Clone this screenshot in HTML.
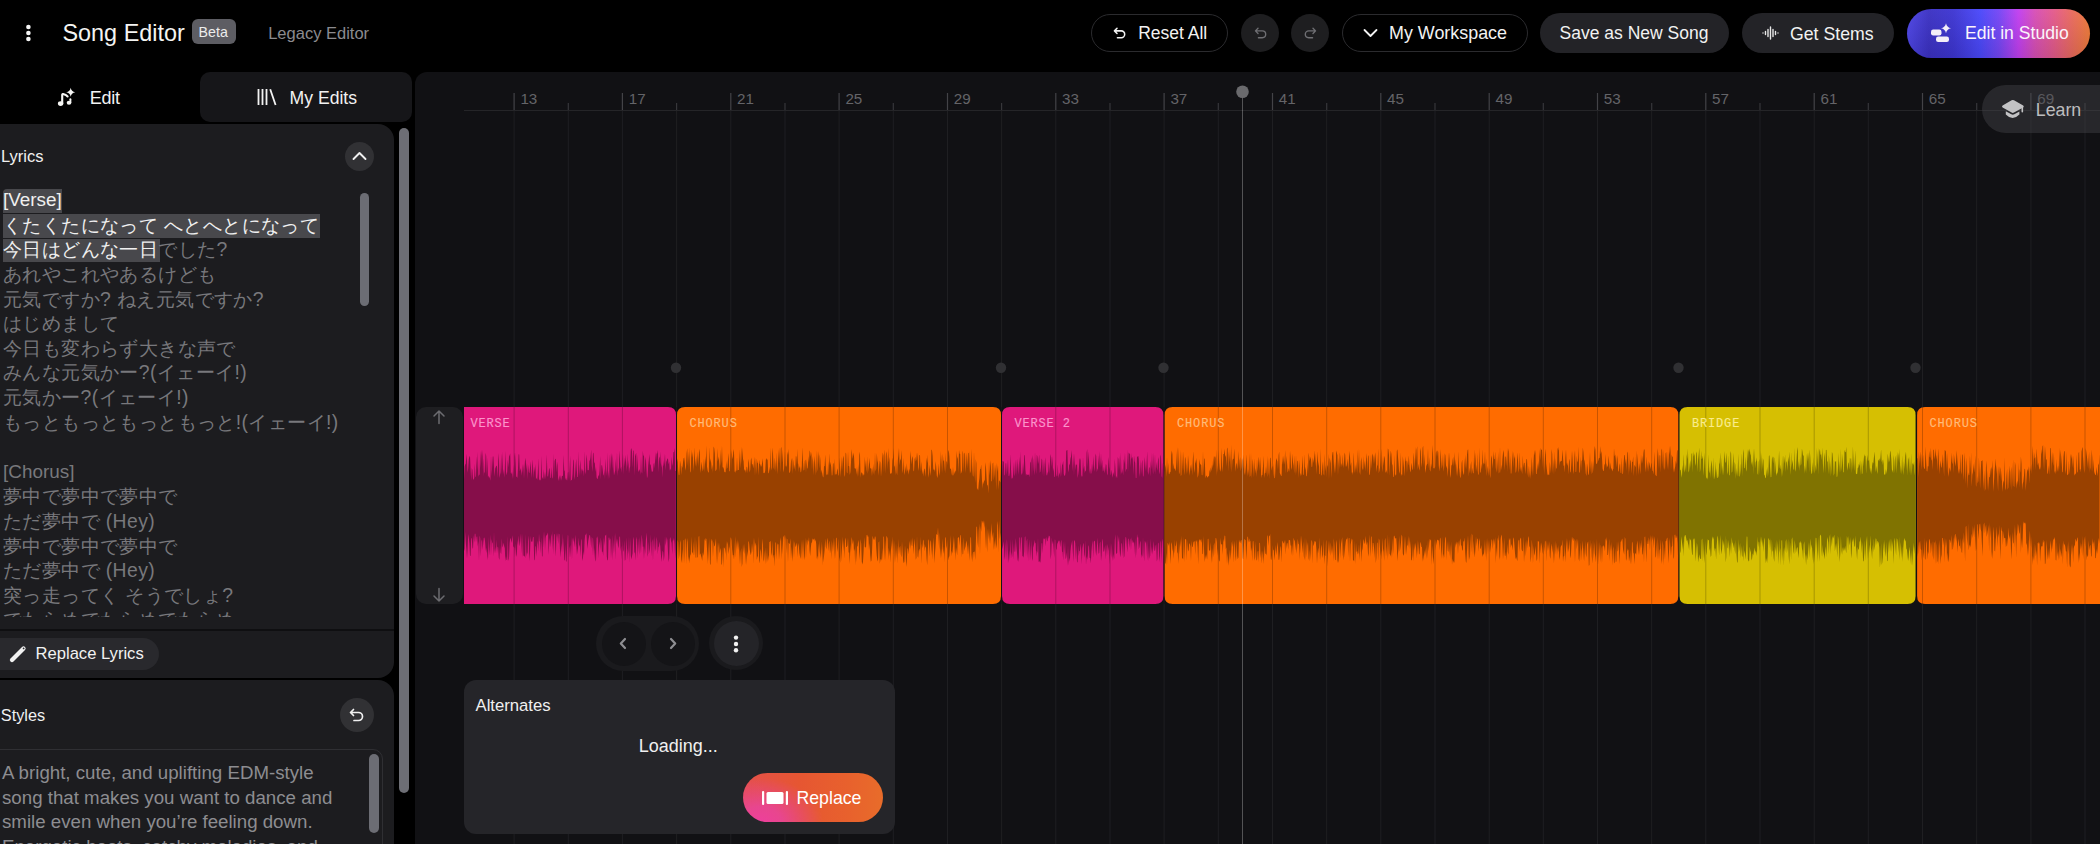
<!DOCTYPE html>
<html><head><meta charset="utf-8">
<style>
html,body{margin:0;padding:0}
body{width:2100px;height:844px;background:#000;overflow:hidden;position:relative;font-family:"Liberation Sans",sans-serif;color:#f2f2f2}
.a{position:absolute}
.t{position:absolute;line-height:1;white-space:pre}
.btn{position:absolute;box-sizing:border-box;border-radius:999px}
svg{position:absolute;overflow:visible}
</style></head><body>

<!-- ===== HEADER ===== -->
<svg style="left:0;top:0" width="40" height="60"><circle cx="28.4" cy="27" r="2.3" fill="#f5f5f5"/><circle cx="28.4" cy="33" r="2.3" fill="#f5f5f5"/><circle cx="28.4" cy="39" r="2.3" fill="#f5f5f5"/></svg>
<div class="t" style="left:62.5px;top:22.1px;font-size:23.4px;color:#f4f4f2">Song Editor</div>
<div class="a" style="left:191.7px;top:19.4px;width:44.6px;height:24.3px;border-radius:6px;background:#5d5d63"></div>
<div class="t" style="left:198.6px;top:24.7px;font-size:14.2px;color:#ececec">Beta</div>
<div class="t" style="left:268.2px;top:24.8px;font-size:16.5px;color:#8b8b8f">Legacy Editor</div>

<!-- Reset All -->
<div class="btn" style="left:1091px;top:14px;width:137px;height:38px;border:1px solid #2b2b2e"></div>
<svg style="left:1112px;top:26px" width="16" height="14" viewBox="-1.2 -1.2 18.4 16.4"><path d="M4.5 1.5 L1.5 4.5 L4.5 7.5 M1.8 4.5 H9.5 a4 4 0 0 1 0 8 H5" fill="none" stroke="#f2f2f2" stroke-width="1.8" stroke-linecap="round" stroke-linejoin="round"/></svg>
<div class="t" style="left:1138.2px;top:25.3px;font-size:17.5px">Reset All</div>
<!-- undo / redo -->
<div class="btn" style="left:1241px;top:14px;width:38px;height:38px;background:#1e1e20"></div>
<svg style="left:1252.5px;top:26px" width="16" height="14" viewBox="-1.2 -1.2 18.4 16.4"><path d="M4.5 1.5 L1.5 4.5 L4.5 7.5 M1.8 4.5 H9.5 a4 4 0 0 1 0 8 H5" fill="none" stroke="#6f6f73" stroke-width="1.6" stroke-linecap="round" stroke-linejoin="round"/></svg>
<div class="btn" style="left:1291px;top:14px;width:38px;height:38px;background:#1e1e20"></div>
<svg style="left:1302px;top:26px" width="16" height="14" viewBox="-1.2 -1.2 18.4 16.4"><path d="M11.5 1.5 L14.5 4.5 L11.5 7.5 M14.2 4.5 H6.5 a4 4 0 0 0 0 8 H11" fill="none" stroke="#6f6f73" stroke-width="1.6" stroke-linecap="round" stroke-linejoin="round"/></svg>
<!-- My Workspace -->
<div class="btn" style="left:1342px;top:14px;width:186px;height:38px;border:1px solid #2b2b2e"></div>
<svg style="left:1363px;top:28px" width="16" height="10" viewBox="0 0 16 10"><path d="M1.5 2 L7.5 8 L13.5 2" fill="none" stroke="#f2f2f2" stroke-width="1.8" stroke-linecap="round" stroke-linejoin="round"/></svg>
<div class="t" style="left:1389px;top:25.3px;font-size:17.9px">My Workspace</div>
<!-- Save as New Song -->
<div class="btn" style="left:1540px;top:13px;width:189px;height:40px;background:#232327"></div>
<div class="t" style="left:1559.6px;top:25.3px;font-size:17.5px">Save as New Song</div>
<!-- Get Stems -->
<div class="btn" style="left:1742px;top:13px;width:152px;height:40px;background:#232327"></div>
<svg style="left:1762px;top:26px" width="17" height="14" viewBox="0 0 17 14"><g stroke="#e8e8e8" stroke-width="1.4" stroke-linecap="round"><path d="M1 7v0M3.5 5.5v3M6 3.5v7M8.5 1v12M11 3.5v7M13.5 5.5v3M16 7v0"/></g></svg>
<div class="t" style="left:1790px;top:25.8px;font-size:17.7px">Get Stems</div>
<!-- Edit in Studio -->
<div class="btn" style="left:1907px;top:8.5px;width:183px;height:49px;background:linear-gradient(90deg,#4d45e6 0%,#3b31c4 12%,#3d35d2 25%,#4a48fb 40%,#7446f6 50%,#c23ff0 61%,#d84fb6 70%,#e45a8c 80%,#ea6a5e 90%,#ee7a38 100%)"></div>
<div class="btn" style="left:1907px;top:8.5px;width:183px;height:49px;background:linear-gradient(180deg,rgba(255,255,255,0.04),rgba(0,0,0,0.10))"></div>
<svg style="left:1930px;top:22px" width="22" height="22" viewBox="0 0 22 22"><rect x="1" y="7.5" width="10.5" height="6" rx="2.2" fill="#f3eef8"/><rect x="6" y="14.5" width="13" height="5.5" rx="2.2" fill="#f3eef8"/><path d="M16 1.2 Q16.8 5.4 21 6.2 Q16.8 7 16 11.2 Q15.2 7 11 6.2 Q15.2 5.4 16 1.2Z" fill="#f3eef8"/></svg>
<div class="t" style="left:1965px;top:25.3px;font-size:17.6px;color:#fbf4fb">Edit in Studio</div>

<!-- ===== LEFT PANEL ===== -->
<svg style="left:50px;top:80px" width="30" height="30" viewBox="0 0 30 30"><ellipse cx="10.6" cy="23.6" rx="2.7" ry="2.3" fill="#f5f5f3"/><path d="M12.2 23.5 V14.8 Q12.5 13.6 14 14.2 Q16.2 15 17.6 16.4" fill="none" stroke="#f5f5f3" stroke-width="2.1" stroke-linecap="round"/><ellipse cx="19" cy="22.8" rx="2.3" ry="2" fill="#f5f5f3"/><path d="M20.4 22.6 V19.3" stroke="#f5f5f3" stroke-width="1.9" stroke-linecap="round"/><path d="M20.7 7.8 Q21.3 11.6 25.2 12.3 Q21.3 13 20.7 16.8 Q20.1 13 16.2 12.3 Q20.1 11.6 20.7 7.8Z" fill="#f5f5f3"/></svg>
<div class="t" style="left:89.8px;top:89.4px;font-size:18px;letter-spacing:-0.25px">Edit</div>
<div class="a" style="left:200px;top:72px;width:212px;height:50px;border-radius:10px;background:#161619"></div>
<svg style="left:257px;top:88px" width="22" height="18" viewBox="0 0 22 18"><g stroke="#f2f2f2" stroke-width="1.8" stroke-linecap="butt"><path d="M1.5 1v16M5.5 1v16M9.5 1v16M13.2 1.2L18.6 17"/></g></svg>
<div class="t" style="left:289.6px;top:89.6px;font-size:17.6px">My Edits</div>

<!-- Lyrics panel -->
<div class="a" style="left:0;top:124px;width:394px;height:554px;border-radius:0 16px 16px 0;background:#1c1c1f"></div>
<div class="t" style="left:1px;top:148px;font-size:16.5px;color:#f0f0f0">Lyrics</div>
<div class="a" style="left:344.6px;top:141.7px;width:29.3px;height:29.3px;border-radius:50%;background:#313134"></div>
<svg style="left:352px;top:150px" width="16" height="12" viewBox="0 0 16 12"><path d="M1.5 9 L7.5 3 L13.5 9" fill="none" stroke="#f0f0f0" stroke-width="1.9" stroke-linecap="round" stroke-linejoin="round"/></svg>

<div class="a" style="left:3.3px;top:189.2px;width:58.3px;height:23.4px;border-radius:4px 0 0 0;background:#48484c"></div>
<div class="a" style="left:3.3px;top:213.6px;width:316.3px;height:24.4px;background:#48484c"></div>
<div class="a" style="left:3.3px;top:238.6px;width:156.7px;height:23.7px;background:#48484c"></div>
<div class="a" style="left:0;top:187.3px;width:355px;height:429.7px;overflow:hidden">
<div style="font-size:19.35px;letter-spacing:0.4px;line-height:24.59px;color:#78787c;padding-left:3px;white-space:pre;font-weight:300"><span style="color:#f0f0f0;letter-spacing:0;font-size:18.9px">[Verse]</span>
<span style="color:#f0f0f0">くたくたになって へとへとになって</span>
<span style="color:#f0f0f0">今日はどんな一日</span>でした?
あれやこれやあるけども
元気ですか? ねえ元気ですか?
はじめまして
今日も変わらず大きな声で
みんな元気かー?(イェーイ!)
元気かー?(イェーイ!)
もっともっともっともっと!(イェーイ!)

<span style="letter-spacing:0;font-size:18.9px">[Chorus]</span>
夢中で夢中で夢中で
ただ夢中で (Hey)
夢中で夢中で夢中で
ただ夢中で (Hey)
突っ走ってく そうでしょ?
でたらめでたらめでたらめ
</div></div>
<div class="a" style="left:359.8px;top:192.8px;width:9.2px;height:113px;border-radius:6px;background:#6c6d74"></div>
<div class="a" style="left:0;top:629px;width:394px;height:1.5px;background:#0f0f11"></div>
<div class="btn" style="left:-20px;top:637.6px;width:179px;height:32.8px;background:#29292d"></div>
<svg style="left:9px;top:645px" width="20" height="18" viewBox="0 0 20 18"><path d="M3 15 L14.5 3.5" stroke="#f2f2f2" stroke-width="4.2" stroke-linecap="round"/><circle cx="14.6" cy="3.4" r="0.9" fill="#29292d"/></svg>
<div class="t" style="left:35.5px;top:646px;font-size:16.6px">Replace Lyrics</div>

<!-- Styles panel -->
<div class="a" style="left:0;top:680.4px;width:394px;height:200px;border-radius:0 16px 0 0;background:#1c1c1f"></div>
<div class="t" style="left:0.8px;top:707.2px;font-size:16.3px;color:#f0f0f0">Styles</div>
<div class="a" style="left:340px;top:698px;width:34px;height:34px;border-radius:50%;background:#313134"></div>
<svg style="left:349px;top:708px" width="16" height="14" viewBox="0 0 16 14"><path d="M4.5 1.5 L1.5 4.5 L4.5 7.5 M1.8 4.5 H9.5 a4 4 0 0 1 0 8 H5" fill="none" stroke="#f0f0f0" stroke-width="1.7" stroke-linecap="round" stroke-linejoin="round"/></svg>
<div class="a" style="left:-12px;top:749px;width:395px;height:120px;box-sizing:border-box;border:1px solid #2f2f33;border-radius:10px"></div>
<div class="a" style="left:2px;top:761px;width:360px;font-size:18.7px;line-height:24.5px;color:#8d8d91">A bright, cute, and uplifting EDM-style<br>song that makes you want to dance and<br>smile even when you’re feeling down.<br>Energetic beats, catchy melodies, and</div>
<div class="a" style="left:369px;top:754px;width:10px;height:79px;border-radius:5px;background:#6c6d74"></div>

<!-- left column scrollbar -->
<div class="a" style="left:399px;top:128px;width:10px;height:665px;border-radius:5px;background:#6d6e75"></div>

<!-- ===== TIMELINE ===== -->
<div class="a" style="left:415px;top:72px;width:1700px;height:800px;border-radius:12px 0 0 0;background:#111114;overflow:hidden">
<svg style="left:-415px;top:-72px" width="2100" height="844" viewBox="0 0 2100 844">
<path d="M514.1 110V844M568.3 110V844M622.4 110V844M676.6 110V844M730.8 110V844M785.0 110V844M839.1 110V844M893.3 110V844M947.5 110V844M1001.6 110V844M1055.8 110V844M1110.0 110V844M1164.1 110V844M1218.3 110V844M1272.5 110V844M1326.7 110V844M1380.8 110V844M1435.0 110V844M1489.2 110V844M1543.3 110V844M1597.5 110V844M1651.7 110V844M1705.8 110V844M1760.0 110V844M1814.2 110V844M1868.3 110V844M1922.5 110V844M1976.7 110V844M2030.9 110V844M2085.0 110V844" stroke="#1f1f22" stroke-width="1"/>
<path d="M464 110.5H2100" stroke="#252528" stroke-width="1"/>
<path d="M514.1 93V110M622.4 93V110M730.8 93V110M839.1 93V110M947.5 93V110M1055.8 93V110M1164.1 93V110M1272.5 93V110M1380.8 93V110M1489.2 93V110M1597.5 93V110M1705.8 93V110M1814.2 93V110M1922.5 93V110M2030.9 93V110" stroke="#434347" stroke-width="1.2"/>
<path d="M568.3 103V110M676.6 103V110M785.0 103V110M893.3 103V110M1001.6 103V110M1110.0 103V110M1218.3 103V110M1326.7 103V110M1435.0 103V110M1543.3 103V110M1651.7 103V110M1760.0 103V110M1868.3 103V110M1976.7 103V110M2085.0 103V110" stroke="#37373a" stroke-width="1.2"/>
<circle cx="676" cy="367.7" r="5.2" fill="#303033"/>
<circle cx="1001" cy="367.7" r="5.2" fill="#303033"/>
<circle cx="1163.5" cy="367.7" r="5.2" fill="#303033"/>
<circle cx="1678.5" cy="367.7" r="5.2" fill="#303033"/>
<circle cx="1915.5" cy="367.7" r="5.2" fill="#303033"/>
<path d="M464 407H668Q676 407 676 415V596Q676 604 668 604H464Z" fill="#df187b"/>
<path d="M685 407H993Q1001 407 1001 415V596Q1001 604 993 604H685Q677 604 677 596V415Q677 407 685 407Z" fill="#ff6c00"/>
<path d="M1010 407H1155.4Q1163.4 407 1163.4 415V596Q1163.4 604 1155.4 604H1010Q1002 604 1002 596V415Q1002 407 1010 407Z" fill="#df187b"/>
<path d="M1172.6 407H1670.3Q1678.3 407 1678.3 415V596Q1678.3 604 1670.3 604H1172.6Q1164.6 604 1164.6 596V415Q1164.6 407 1172.6 407Z" fill="#ff6c00"/>
<path d="M1687.5 407H1907.6Q1915.6 407 1915.6 415V596Q1915.6 604 1907.6 604H1687.5Q1679.5 604 1679.5 596V415Q1679.5 407 1687.5 407Z" fill="#d6bf02"/>
<path d="M1925.1 407H2112Q2120 407 2120 415V596Q2120 604 2112 604H1925.1Q1917.1 604 1917.1 596V415Q1917.1 407 1925.1 407Z" fill="#ff6c00"/>
<path d="M514.1 407V604M568.3 407V604M622.4 407V604M676.6 407V604M730.8 407V604M785.0 407V604M839.1 407V604M893.3 407V604M947.5 407V604M1001.6 407V604M1055.8 407V604M1110.0 407V604M1164.1 407V604M1218.3 407V604M1272.5 407V604M1326.7 407V604M1380.8 407V604M1435.0 407V604M1489.2 407V604M1543.3 407V604M1597.5 407V604M1651.7 407V604M1705.8 407V604M1760.0 407V604M1814.2 407V604M1868.3 407V604M1922.5 407V604M1976.7 407V604M2030.9 407V604M2085.0 407V604" stroke="rgba(0,0,0,0.22)" stroke-width="1"/>
<path d="M464.0 479.4L464.6 466.7L465.2 464.4L465.8 463.8L466.4 453.7L467.0 460.9L467.6 472.8L468.2 468.0L468.8 459.3L469.4 456.5L470.0 456.2L470.6 469.8L471.2 480.4L471.8 468.0L472.4 470.0L473.0 478.5L473.6 479.9L474.2 478.0L474.8 463.7L475.4 476.7L476.0 476.8L476.6 456.0L477.2 470.7L477.8 451.8L478.4 476.7L479.0 474.7L479.6 474.8L480.2 450.8L480.8 468.1L481.4 456.0L482.0 449.8L482.6 456.8L483.2 476.5L483.8 458.2L484.4 473.4L485.0 471.7L485.6 452.8L486.2 456.1L486.8 475.5L487.4 457.2L488.0 477.9L488.6 475.6L489.2 477.1L489.8 478.1L490.4 480.8L491.0 455.3L491.6 476.1L492.2 465.7L492.8 456.4L493.4 456.5L494.0 467.2L494.6 476.7L495.2 468.4L495.8 466.9L496.4 465.4L497.0 466.5L497.6 478.1L498.2 460.5L498.8 452.9L499.4 477.9L500.0 475.1L500.6 472.1L501.2 453.2L501.8 474.4L502.4 451.4L503.0 474.7L503.6 469.1L504.2 477.7L504.8 469.4L505.4 450.8L506.0 471.5L506.6 475.3L507.2 471.9L507.8 459.5L508.4 467.5L509.0 456.8L509.6 455.2L510.2 453.4L510.8 473.1L511.4 474.1L512.0 471.7L512.6 479.0L513.2 464.5L513.8 479.1L514.4 456.6L515.0 452.4L515.6 462.7L516.2 477.0L516.8 476.4L517.4 478.1L518.0 468.6L518.6 454.3L519.2 454.4L519.8 471.4L520.4 468.0L521.0 471.1L521.6 475.7L522.2 463.7L522.8 473.0L523.4 463.8L524.0 478.7L524.6 466.7L525.2 457.7L525.8 461.2L526.4 470.3L527.0 462.4L527.6 479.2L528.2 464.4L528.8 472.1L529.4 473.2L530.0 468.1L530.6 461.3L531.2 471.5L531.8 477.9L532.4 459.3L533.0 465.9L533.6 477.9L534.2 466.6L534.8 472.3L535.4 463.8L536.0 479.5L536.6 477.5L537.2 480.1L537.8 473.0L538.4 457.9L539.0 478.5L539.6 480.5L540.2 479.4L540.8 480.7L541.4 455.7L542.0 476.8L542.6 478.3L543.2 479.1L543.8 469.0L544.4 479.6L545.0 471.4L545.6 479.2L546.2 469.4L546.8 454.4L547.4 475.4L548.0 476.9L548.6 472.2L549.2 467.7L549.8 469.7L550.4 478.1L551.0 477.8L551.6 466.8L552.2 478.8L552.8 477.2L553.4 453.4L554.0 478.5L554.6 461.1L555.2 458.9L555.8 458.7L556.4 472.6L557.0 461.6L557.6 465.2L558.2 481.0L558.8 478.8L559.4 475.0L560.0 481.0L560.6 474.8L561.2 480.7L561.8 476.3L562.4 476.1L563.0 475.4L563.6 454.8L564.2 470.2L564.8 470.9L565.4 480.1L566.0 477.8L566.6 480.0L567.2 480.6L567.8 472.5L568.4 471.9L569.0 480.5L569.6 469.7L570.2 455.6L570.8 481.0L571.4 480.1L572.0 479.8L572.6 473.5L573.2 460.7L573.8 459.3L574.4 479.8L575.0 475.9L575.6 466.1L576.2 458.8L576.8 470.3L577.4 476.9L578.0 477.1L578.6 451.2L579.2 476.5L579.8 466.5L580.4 459.9L581.0 475.2L581.6 468.1L582.2 471.4L582.8 468.9L583.4 471.2L584.0 476.5L584.6 451.1L585.2 471.4L585.8 474.6L586.4 454.3L587.0 458.7L587.6 470.2L588.2 470.1L588.8 470.5L589.4 460.5L590.0 460.6L590.6 456.7L591.2 449.5L591.8 465.4L592.4 472.0L593.0 452.4L593.6 453.5L594.2 463.6L594.8 462.1L595.4 472.1L596.0 466.8L596.6 477.2L597.2 479.3L597.8 478.3L598.4 475.1L599.0 476.2L599.6 470.6L600.2 455.8L600.8 479.8L601.4 465.7L602.0 464.7L602.6 468.8L603.2 474.3L603.8 475.8L604.4 468.7L605.0 479.3L605.6 458.7L606.2 470.0L606.8 476.1L607.4 452.6L608.0 479.4L608.6 470.7L609.2 478.8L609.8 454.1L610.4 471.1L611.0 453.1L611.6 457.3L612.2 469.1L612.8 453.8L613.4 467.6L614.0 475.5L614.6 473.0L615.2 470.6L615.8 458.9L616.4 473.1L617.0 451.9L617.6 476.2L618.2 467.2L618.8 471.4L619.4 450.4L620.0 458.9L620.6 469.2L621.2 466.6L621.8 472.8L622.4 461.0L623.0 453.7L623.6 474.4L624.2 457.2L624.8 466.6L625.4 454.7L626.0 461.7L626.6 471.5L627.2 453.5L627.8 467.2L628.4 460.1L629.0 473.5L629.6 468.4L630.2 466.2L630.8 449.8L631.4 448.0L632.0 451.8L632.6 467.8L633.2 450.8L633.8 450.5L634.4 475.6L635.0 456.5L635.6 454.3L636.2 452.9L636.8 471.7L637.4 454.6L638.0 469.6L638.6 471.9L639.2 470.6L639.8 468.9L640.4 475.0L641.0 456.3L641.6 472.1L642.2 473.5L642.8 450.7L643.4 456.1L644.0 455.2L644.6 472.8L645.2 461.0L645.8 456.7L646.4 467.9L647.0 478.3L647.6 476.3L648.2 465.6L648.8 460.0L649.4 454.0L650.0 465.2L650.6 464.1L651.2 468.2L651.8 471.7L652.4 471.2L653.0 472.0L653.6 464.3L654.2 462.5L654.8 468.6L655.4 451.9L656.0 461.3L656.6 453.4L657.2 453.4L657.8 450.0L658.4 472.2L659.0 458.3L659.6 456.5L660.2 464.5L660.8 451.5L661.4 467.8L662.0 464.1L662.6 477.4L663.2 460.3L663.8 466.4L664.4 462.1L665.0 453.6L665.6 470.5L666.2 461.9L666.8 460.4L667.4 458.4L668.0 458.7L668.6 464.4L669.2 461.6L669.8 470.8L670.4 468.5L671.0 470.7L671.6 456.8L672.2 463.2L672.8 466.0L673.4 452.3L674.0 451.9L674.6 448.1L675.2 471.0L675.8 470.8L675.8 540.7L675.2 559.0L674.6 544.0L674.0 537.7L673.4 540.4L672.8 540.5L672.2 554.3L671.6 543.0L671.0 541.1L670.4 537.1L669.8 539.0L669.2 558.2L668.6 562.3L668.0 552.5L667.4 540.4L666.8 536.9L666.2 541.6L665.6 545.9L665.0 536.0L664.4 555.7L663.8 561.2L663.2 552.2L662.6 550.4L662.0 556.4L661.4 562.0L660.8 552.8L660.2 545.8L659.6 541.4L659.0 546.2L658.4 547.2L657.8 554.2L657.2 540.9L656.6 536.7L656.0 551.5L655.4 548.5L654.8 535.7L654.2 552.2L653.6 537.8L653.0 561.3L652.4 539.0L651.8 542.6L651.2 557.1L650.6 534.4L650.0 548.9L649.4 553.4L648.8 541.4L648.2 553.4L647.6 557.0L647.0 539.2L646.4 532.7L645.8 541.8L645.2 554.3L644.6 546.1L644.0 559.2L643.4 546.5L642.8 546.7L642.2 539.0L641.6 534.5L641.0 553.8L640.4 545.8L639.8 537.1L639.2 555.1L638.6 546.9L638.0 538.2L637.4 558.7L636.8 536.7L636.2 539.7L635.6 560.7L635.0 552.1L634.4 553.4L633.8 539.7L633.2 536.8L632.6 553.2L632.0 556.2L631.4 559.6L630.8 555.4L630.2 537.8L629.6 562.9L629.0 536.6L628.4 554.2L627.8 548.3L627.2 560.1L626.6 537.5L626.0 548.6L625.4 559.7L624.8 560.8L624.2 540.2L623.6 552.0L623.0 550.0L622.4 540.8L621.8 559.4L621.2 545.8L620.6 551.2L620.0 536.4L619.4 536.8L618.8 545.6L618.2 548.6L617.6 542.1L617.0 538.5L616.4 544.3L615.8 532.8L615.2 560.3L614.6 534.1L614.0 554.1L613.4 540.0L612.8 561.0L612.2 535.5L611.6 547.8L611.0 558.5L610.4 538.3L609.8 540.6L609.2 537.4L608.6 537.8L608.0 559.8L607.4 560.5L606.8 556.4L606.2 534.4L605.6 535.3L605.0 536.1L604.4 546.0L603.8 536.9L603.2 555.9L602.6 551.3L602.0 552.6L601.4 542.7L600.8 537.6L600.2 550.0L599.6 541.2L599.0 545.5L598.4 558.3L597.8 538.9L597.2 536.3L596.6 538.5L596.0 561.5L595.4 560.1L594.8 547.8L594.2 559.3L593.6 537.9L593.0 556.2L592.4 538.6L591.8 537.1L591.2 548.4L590.6 540.3L590.0 535.0L589.4 535.2L588.8 537.9L588.2 541.3L587.6 549.0L587.0 542.5L586.4 533.2L585.8 534.6L585.2 535.2L584.6 540.7L584.0 555.7L583.4 551.0L582.8 561.0L582.2 557.9L581.6 538.5L581.0 541.1L580.4 557.0L579.8 544.6L579.2 546.9L578.6 537.4L578.0 548.6L577.4 554.4L576.8 543.4L576.2 555.3L575.6 534.8L575.0 540.8L574.4 547.3L573.8 537.2L573.2 542.1L572.6 537.5L572.0 560.2L571.4 536.8L570.8 557.9L570.2 545.1L569.6 548.2L569.0 558.2L568.4 535.8L567.8 535.1L567.2 544.9L566.6 560.7L566.0 562.2L565.4 544.4L564.8 560.8L564.2 559.7L563.6 537.6L563.0 553.5L562.4 533.5L561.8 552.3L561.2 543.0L560.6 557.4L560.0 550.1L559.4 534.4L558.8 533.4L558.2 543.9L557.6 537.2L557.0 533.0L556.4 537.8L555.8 556.8L555.2 546.0L554.6 533.8L554.0 534.7L553.4 554.4L552.8 530.6L552.2 550.0L551.6 533.8L551.0 536.9L550.4 547.6L549.8 537.7L549.2 544.6L548.6 555.1L548.0 532.6L547.4 533.9L546.8 536.1L546.2 534.5L545.6 538.3L545.0 550.8L544.4 530.9L543.8 548.0L543.2 531.6L542.6 555.8L542.0 557.1L541.4 537.3L540.8 553.5L540.2 541.9L539.6 541.0L539.0 533.6L538.4 551.7L537.8 540.4L537.2 544.9L536.6 556.9L536.0 546.1L535.4 546.8L534.8 559.4L534.2 560.4L533.6 537.3L533.0 536.8L532.4 541.7L531.8 541.2L531.2 542.2L530.6 536.1L530.0 552.9L529.4 561.3L528.8 540.9L528.2 535.5L527.6 554.4L527.0 552.3L526.4 556.7L525.8 534.1L525.2 558.1L524.6 556.3L524.0 555.5L523.4 556.1L522.8 533.4L522.2 557.2L521.6 547.1L521.0 533.3L520.4 539.8L519.8 546.5L519.2 542.6L518.6 535.4L518.0 545.4L517.4 539.9L516.8 557.1L516.2 554.4L515.6 543.4L515.0 557.4L514.4 548.2L513.8 546.3L513.2 547.6L512.6 535.2L512.0 539.4L511.4 542.9L510.8 538.9L510.2 538.1L509.6 543.8L509.0 558.5L508.4 560.9L507.8 536.0L507.2 560.2L506.6 559.9L506.0 556.0L505.4 561.6L504.8 548.3L504.2 546.2L503.6 542.8L503.0 545.9L502.4 547.5L501.8 538.2L501.2 553.9L500.6 552.4L500.0 545.7L499.4 559.9L498.8 557.7L498.2 547.5L497.6 546.4L497.0 553.4L496.4 539.4L495.8 553.5L495.2 546.7L494.6 553.5L494.0 531.7L493.4 556.7L492.8 543.4L492.2 542.4L491.6 539.0L491.0 555.8L490.4 534.5L489.8 547.2L489.2 555.6L488.6 537.0L488.0 560.0L487.4 556.2L486.8 547.4L486.2 553.1L485.6 548.3L485.0 540.9L484.4 537.4L483.8 537.9L483.2 543.5L482.6 550.1L482.0 539.2L481.4 541.5L480.8 556.8L480.2 537.9L479.6 535.4L479.0 561.0L478.4 541.0L477.8 546.7L477.2 536.4L476.6 536.8L476.0 542.3L475.4 533.7L474.8 533.8L474.2 542.7L473.6 535.1L473.0 548.9L472.4 547.4L471.8 538.7L471.2 537.8L470.6 556.3L470.0 555.5L469.4 543.5L468.8 537.7L468.2 534.0L467.6 549.3L467.0 558.6L466.4 548.9L465.8 542.9L465.2 531.8L464.6 548.8L464.0 551.3Z" fill="#860e4a"/>
<path d="M677.0 462.2L677.6 458.2L678.2 470.0L678.8 475.2L679.4 474.8L680.0 460.5L680.6 464.0L681.2 474.9L681.8 465.4L682.4 468.0L683.0 462.6L683.6 458.3L684.2 457.6L684.8 462.6L685.4 470.7L686.0 466.9L686.6 453.6L687.2 448.2L687.8 466.1L688.4 451.2L689.0 470.6L689.6 446.9L690.2 472.8L690.8 471.3L691.4 449.6L692.0 458.1L692.6 451.8L693.2 462.9L693.8 471.1L694.4 447.2L695.0 458.0L695.6 466.5L696.2 455.8L696.8 467.2L697.4 458.6L698.0 451.4L698.6 467.2L699.2 448.8L699.8 452.1L700.4 473.1L701.0 468.6L701.6 461.4L702.2 467.6L702.8 471.5L703.4 468.5L704.0 458.0L704.6 472.2L705.2 455.9L705.8 464.1L706.4 445.5L707.0 466.4L707.6 470.3L708.2 472.5L708.8 472.2L709.4 447.1L710.0 463.0L710.6 458.3L711.2 463.3L711.8 469.9L712.4 464.6L713.0 472.9L713.6 446.5L714.2 447.9L714.8 453.2L715.4 471.0L716.0 470.5L716.6 469.0L717.2 447.9L717.8 461.8L718.4 456.5L719.0 460.7L719.6 472.0L720.2 449.0L720.8 466.0L721.4 459.7L722.0 445.4L722.6 467.2L723.2 467.3L723.8 468.7L724.4 472.1L725.0 472.3L725.6 472.3L726.2 460.7L726.8 468.9L727.4 467.4L728.0 459.2L728.6 453.1L729.2 471.1L729.8 471.4L730.4 448.8L731.0 471.0L731.6 449.9L732.2 456.8L732.8 459.2L733.4 449.1L734.0 452.4L734.6 471.2L735.2 472.7L735.8 470.6L736.4 470.8L737.0 456.8L737.6 470.5L738.2 470.0L738.8 470.0L739.4 449.1L740.0 468.8L740.6 461.6L741.2 446.6L741.8 464.0L742.4 447.4L743.0 458.8L743.6 461.5L744.2 471.1L744.8 469.3L745.4 470.5L746.0 473.1L746.6 466.4L747.2 467.4L747.8 473.3L748.4 458.7L749.0 462.8L749.6 472.5L750.2 469.9L750.8 460.1L751.4 457.6L752.0 464.8L752.6 463.8L753.2 468.5L753.8 464.6L754.4 456.5L755.0 476.0L755.6 457.3L756.2 474.3L756.8 458.5L757.4 462.6L758.0 463.5L758.6 475.4L759.2 459.6L759.8 464.0L760.4 464.8L761.0 466.9L761.6 465.8L762.2 462.2L762.8 458.3L763.4 472.7L764.0 473.2L764.6 472.9L765.2 471.0L765.8 460.1L766.4 458.0L767.0 460.1L767.6 459.2L768.2 472.7L768.8 473.4L769.4 466.4L770.0 472.2L770.6 447.3L771.2 467.5L771.8 470.5L772.4 447.4L773.0 453.5L773.6 467.2L774.2 470.1L774.8 457.4L775.4 464.0L776.0 472.2L776.6 451.9L777.2 474.3L777.8 465.0L778.4 449.1L779.0 463.8L779.6 447.1L780.2 472.8L780.8 448.7L781.4 446.8L782.0 463.2L782.6 449.2L783.2 469.1L783.8 472.5L784.4 463.5L785.0 451.0L785.6 466.7L786.2 465.3L786.8 467.5L787.4 451.6L788.0 455.1L788.6 448.7L789.2 472.1L789.8 473.3L790.4 470.3L791.0 461.2L791.6 457.9L792.2 473.9L792.8 457.8L793.4 462.3L794.0 469.8L794.6 464.6L795.2 471.7L795.8 456.2L796.4 456.5L797.0 464.9L797.6 448.4L798.2 472.6L798.8 463.1L799.4 468.4L800.0 466.1L800.6 472.6L801.2 471.5L801.8 466.1L802.4 447.0L803.0 462.0L803.6 470.4L804.2 470.1L804.8 460.9L805.4 459.4L806.0 472.5L806.6 458.9L807.2 467.5L807.8 469.0L808.4 456.1L809.0 462.7L809.6 450.2L810.2 452.3L810.8 456.7L811.4 452.0L812.0 469.7L812.6 455.9L813.2 462.6L813.8 475.2L814.4 455.8L815.0 462.6L815.6 475.8L816.2 450.1L816.8 472.9L817.4 468.8L818.0 451.0L818.6 456.5L819.2 468.7L819.8 454.2L820.4 460.2L821.0 473.6L821.6 469.5L822.2 473.2L822.8 476.5L823.4 477.4L824.0 466.0L824.6 466.2L825.2 454.6L825.8 465.6L826.4 475.4L827.0 473.9L827.6 475.1L828.2 461.0L828.8 475.7L829.4 453.0L830.0 465.6L830.6 461.8L831.2 467.0L831.8 475.5L832.4 475.3L833.0 462.7L833.6 463.9L834.2 476.1L834.8 458.3L835.4 475.1L836.0 473.7L836.6 474.7L837.2 468.3L837.8 470.4L838.4 475.8L839.0 474.9L839.6 457.3L840.2 468.4L840.8 477.3L841.4 456.0L842.0 471.5L842.6 462.1L843.2 455.6L843.8 458.6L844.4 475.1L845.0 476.9L845.6 452.4L846.2 453.8L846.8 472.2L847.4 473.6L848.0 450.9L848.6 466.1L849.2 466.2L849.8 475.1L850.4 471.9L851.0 462.2L851.6 449.1L852.2 454.8L852.8 459.0L853.4 452.4L854.0 455.9L854.6 468.0L855.2 468.7L855.8 468.2L856.4 474.8L857.0 466.5L857.6 477.1L858.2 463.9L858.8 476.7L859.4 451.4L860.0 454.9L860.6 477.8L861.2 471.7L861.8 473.3L862.4 473.2L863.0 476.0L863.6 474.2L864.2 474.8L864.8 456.4L865.4 467.8L866.0 459.4L866.6 469.6L867.2 473.8L867.8 456.0L868.4 472.2L869.0 464.4L869.6 457.8L870.2 469.1L870.8 467.8L871.4 468.9L872.0 476.2L872.6 466.9L873.2 474.6L873.8 463.5L874.4 475.8L875.0 451.8L875.6 471.4L876.2 468.8L876.8 452.9L877.4 460.6L878.0 463.0L878.6 475.8L879.2 466.7L879.8 460.6L880.4 462.6L881.0 476.8L881.6 468.9L882.2 458.7L882.8 452.6L883.4 455.4L884.0 472.7L884.6 449.2L885.2 455.9L885.8 473.8L886.4 451.3L887.0 453.8L887.6 469.6L888.2 447.8L888.8 462.4L889.4 456.7L890.0 472.7L890.6 474.2L891.2 472.6L891.8 473.9L892.4 460.4L893.0 457.6L893.6 448.1L894.2 467.1L894.8 465.2L895.4 475.5L896.0 458.8L896.6 472.6L897.2 475.3L897.8 460.6L898.4 454.9L899.0 447.7L899.6 465.4L900.2 458.7L900.8 460.7L901.4 450.1L902.0 462.5L902.6 473.2L903.2 469.1L903.8 457.7L904.4 475.1L905.0 472.1L905.6 465.7L906.2 473.0L906.8 463.1L907.4 471.4L908.0 469.0L908.6 474.7L909.2 470.4L909.8 468.5L910.4 450.7L911.0 457.5L911.6 464.4L912.2 456.1L912.8 457.9L913.4 470.6L914.0 471.5L914.6 459.6L915.2 456.7L915.8 461.6L916.4 459.4L917.0 452.2L917.6 457.6L918.2 467.2L918.8 471.0L919.4 455.0L920.0 455.2L920.6 471.5L921.2 461.3L921.8 469.2L922.4 474.4L923.0 469.2L923.6 476.8L924.2 468.4L924.8 469.1L925.4 476.9L926.0 468.4L926.6 457.4L927.2 463.2L927.8 454.7L928.4 477.7L929.0 473.8L929.6 464.4L930.2 471.9L930.8 475.9L931.4 449.6L932.0 450.2L932.6 455.8L933.2 468.3L933.8 469.9L934.4 469.5L935.0 472.3L935.6 460.9L936.2 466.5L936.8 475.8L937.4 478.0L938.0 473.4L938.6 463.3L939.2 476.1L939.8 472.3L940.4 450.7L941.0 473.1L941.6 454.1L942.2 473.2L942.8 453.4L943.4 461.5L944.0 459.9L944.6 471.7L945.2 452.6L945.8 473.7L946.4 461.5L947.0 461.6L947.6 465.3L948.2 451.9L948.8 449.7L949.4 457.1L950.0 469.1L950.6 468.3L951.2 469.9L951.8 474.4L952.4 475.7L953.0 466.8L953.6 475.8L954.2 473.7L954.8 472.0L955.4 470.2L956.0 472.8L956.6 450.7L957.2 458.9L957.8 456.2L958.4 473.2L959.0 449.7L959.6 453.7L960.2 454.1L960.8 473.7L961.4 472.6L962.0 470.6L962.6 450.4L963.2 454.0L963.8 472.4L964.4 452.5L965.0 453.8L965.6 473.0L966.2 463.4L966.8 452.3L967.4 468.6L968.0 453.2L968.6 452.7L969.2 474.0L969.8 450.4L970.4 473.2L971.0 471.0L971.6 448.7L972.2 466.2L972.8 475.4L973.4 476.7L974.0 451.4L974.6 471.6L975.2 483.1L975.8 458.9L976.4 463.3L977.0 490.3L977.6 488.1L978.2 490.6L978.8 482.9L979.4 478.2L980.0 469.2L980.6 469.1L981.2 464.4L981.8 476.1L982.4 488.8L983.0 481.4L983.6 484.2L984.2 479.7L984.8 481.6L985.4 462.3L986.0 467.2L986.6 478.5L987.2 485.5L987.8 485.1L988.4 493.6L989.0 461.1L989.6 475.7L990.2 466.0L990.8 460.0L991.4 481.2L992.0 481.3L992.6 463.7L993.2 462.5L993.8 480.6L994.4 474.6L995.0 464.6L995.6 470.8L996.2 490.7L996.8 462.5L997.4 472.1L998.0 463.9L998.6 489.9L999.2 480.2L999.8 481.1L1000.4 482.5L1001.0 462.7L1001.0 546.2L1000.4 532.4L999.8 539.5L999.2 520.0L998.6 553.1L998.0 525.6L997.4 520.9L996.8 544.1L996.2 548.7L995.6 537.1L995.0 549.8L994.4 540.2L993.8 550.6L993.2 531.7L992.6 538.3L992.0 532.1L991.4 523.0L990.8 544.5L990.2 530.4L989.6 543.8L989.0 527.9L988.4 539.5L987.8 528.4L987.2 552.5L986.6 543.2L986.0 524.4L985.4 549.3L984.8 520.5L984.2 528.2L983.6 520.3L983.0 523.4L982.4 521.4L981.8 520.6L981.2 532.0L980.6 525.7L980.0 555.3L979.4 523.5L978.8 531.0L978.2 548.0L977.6 542.3L977.0 526.4L976.4 526.9L975.8 544.5L975.2 560.3L974.6 551.3L974.0 552.1L973.4 552.1L972.8 562.5L972.2 552.3L971.6 559.9L971.0 537.2L970.4 537.6L969.8 550.1L969.2 561.0L968.6 543.1L968.0 554.4L967.4 547.3L966.8 542.9L966.2 540.6L965.6 546.2L965.0 548.2L964.4 551.2L963.8 537.2L963.2 553.7L962.6 554.4L962.0 540.9L961.4 557.9L960.8 535.0L960.2 535.6L959.6 545.9L959.0 537.1L958.4 537.4L957.8 538.0L957.2 555.6L956.6 551.2L956.0 547.2L955.4 561.0L954.8 537.4L954.2 554.1L953.6 535.7L953.0 546.6L952.4 553.4L951.8 550.9L951.2 556.5L950.6 535.3L950.0 545.7L949.4 556.1L948.8 557.5L948.2 560.6L947.6 539.1L947.0 545.8L946.4 548.8L945.8 536.7L945.2 538.2L944.6 562.5L944.0 546.3L943.4 554.0L942.8 548.7L942.2 538.6L941.6 558.0L941.0 548.2L940.4 558.7L939.8 532.5L939.2 550.1L938.6 539.1L938.0 527.2L937.4 535.2L936.8 534.3L936.2 534.6L935.6 545.6L935.0 553.4L934.4 563.5L933.8 537.6L933.2 544.9L932.6 560.0L932.0 541.1L931.4 555.5L930.8 540.1L930.2 541.8L929.6 556.9L929.0 540.8L928.4 539.1L927.8 550.6L927.2 565.2L926.6 558.7L926.0 547.6L925.4 547.2L924.8 543.9L924.2 551.7L923.6 539.4L923.0 541.0L922.4 548.6L921.8 543.7L921.2 564.3L920.6 536.8L920.0 551.8L919.4 548.5L918.8 550.6L918.2 557.7L917.6 556.2L917.0 535.8L916.4 557.8L915.8 559.8L915.2 547.7L914.6 538.5L914.0 546.0L913.4 554.5L912.8 537.3L912.2 546.3L911.6 545.2L911.0 538.8L910.4 549.5L909.8 540.7L909.2 545.9L908.6 554.5L908.0 548.1L907.4 548.9L906.8 561.2L906.2 566.9L905.6 553.0L905.0 545.3L904.4 561.7L903.8 563.3L903.2 561.0L902.6 552.3L902.0 541.4L901.4 557.5L900.8 554.2L900.2 545.8L899.6 547.7L899.0 554.2L898.4 539.0L897.8 564.1L897.2 545.5L896.6 558.6L896.0 543.1L895.4 562.6L894.8 540.3L894.2 563.8L893.6 539.4L893.0 551.3L892.4 536.5L891.8 550.0L891.2 540.7L890.6 563.1L890.0 549.4L889.4 556.3L888.8 547.4L888.2 560.3L887.6 538.5L887.0 536.8L886.4 536.0L885.8 561.5L885.2 540.2L884.6 561.3L884.0 536.5L883.4 536.7L882.8 560.5L882.2 548.1L881.6 560.8L881.0 558.8L880.4 560.0L879.8 563.8L879.2 541.2L878.6 542.6L878.0 561.6L877.4 559.9L876.8 556.0L876.2 548.1L875.6 537.6L875.0 536.1L874.4 539.8L873.8 539.8L873.2 538.3L872.6 535.7L872.0 552.6L871.4 560.7L870.8 561.7L870.2 555.3L869.6 543.0L869.0 550.2L868.4 536.5L867.8 536.7L867.2 534.8L866.6 535.2L866.0 548.6L865.4 546.7L864.8 546.9L864.2 537.3L863.6 551.4L863.0 561.6L862.4 564.5L861.8 562.0L861.2 543.9L860.6 539.0L860.0 551.7L859.4 560.1L858.8 543.2L858.2 539.9L857.6 546.6L857.0 546.3L856.4 562.4L855.8 544.2L855.2 565.5L854.6 548.6L854.0 551.3L853.4 540.0L852.8 544.6L852.2 540.1L851.6 537.0L851.0 552.3L850.4 543.9L849.8 564.3L849.2 552.5L848.6 552.4L848.0 537.7L847.4 545.4L846.8 547.1L846.2 547.1L845.6 537.4L845.0 540.3L844.4 558.9L843.8 540.1L843.2 551.5L842.6 536.8L842.0 548.3L841.4 562.1L840.8 538.8L840.2 562.8L839.6 559.2L839.0 556.8L838.4 538.5L837.8 547.6L837.2 552.3L836.6 537.4L836.0 538.2L835.4 558.9L834.8 538.7L834.2 559.7L833.6 537.6L833.0 551.2L832.4 542.1L831.8 559.4L831.2 540.1L830.6 549.8L830.0 553.6L829.4 540.5L828.8 543.7L828.2 551.6L827.6 537.8L827.0 540.6L826.4 549.4L825.8 546.7L825.2 538.4L824.6 549.9L824.0 556.6L823.4 562.5L822.8 543.9L822.2 566.3L821.6 541.3L821.0 552.9L820.4 558.8L819.8 540.2L819.2 554.0L818.6 543.5L818.0 560.1L817.4 555.5L816.8 559.1L816.2 543.9L815.6 539.5L815.0 541.4L814.4 538.4L813.8 538.9L813.2 539.9L812.6 538.2L812.0 542.6L811.4 542.8L810.8 547.7L810.2 556.3L809.6 550.7L809.0 537.0L808.4 542.0L807.8 539.4L807.2 545.7L806.6 538.9L806.0 558.9L805.4 537.3L804.8 556.2L804.2 560.2L803.6 539.0L803.0 560.4L802.4 539.6L801.8 559.4L801.2 539.9L800.6 559.0L800.0 556.4L799.4 553.1L798.8 545.9L798.2 542.9L797.6 557.4L797.0 542.5L796.4 544.4L795.8 547.3L795.2 545.3L794.6 541.2L794.0 557.9L793.4 539.8L792.8 553.5L792.2 561.9L791.6 546.4L791.0 559.3L790.4 538.2L789.8 543.8L789.2 543.8L788.6 542.4L788.0 562.8L787.4 539.6L786.8 538.2L786.2 553.9L785.6 534.9L785.0 540.0L784.4 534.9L783.8 535.9L783.2 537.6L782.6 554.7L782.0 538.6L781.4 559.6L780.8 541.4L780.2 537.3L779.6 551.3L779.0 559.7L778.4 544.8L777.8 543.2L777.2 545.4L776.6 559.8L776.0 542.4L775.4 542.6L774.8 567.0L774.2 554.4L773.6 555.6L773.0 558.7L772.4 540.7L771.8 556.0L771.2 553.0L770.6 540.8L770.0 541.7L769.4 541.9L768.8 561.0L768.2 555.1L767.6 562.2L767.0 547.4L766.4 563.6L765.8 547.3L765.2 564.6L764.6 550.0L764.0 561.8L763.4 559.6L762.8 538.6L762.2 544.4L761.6 560.0L761.0 551.5L760.4 548.8L759.8 560.7L759.2 563.4L758.6 536.5L758.0 556.0L757.4 557.0L756.8 560.1L756.2 545.5L755.6 542.4L755.0 546.9L754.4 538.2L753.8 564.2L753.2 537.6L752.6 552.7L752.0 543.3L751.4 552.1L750.8 555.3L750.2 552.6L749.6 549.0L749.0 542.2L748.4 540.9L747.8 556.9L747.2 551.1L746.6 565.5L746.0 547.0L745.4 564.8L744.8 543.4L744.2 554.0L743.6 550.0L743.0 543.9L742.4 563.4L741.8 567.0L741.2 548.1L740.6 553.0L740.0 564.4L739.4 553.3L738.8 540.7L738.2 550.3L737.6 539.2L737.0 550.1L736.4 540.7L735.8 558.0L735.2 536.1L734.6 549.5L734.0 559.5L733.4 554.9L732.8 555.3L732.2 550.0L731.6 540.4L731.0 537.7L730.4 537.5L729.8 546.4L729.2 548.9L728.6 554.3L728.0 544.2L727.4 541.4L726.8 560.8L726.2 540.6L725.6 554.2L725.0 549.0L724.4 547.7L723.8 547.5L723.2 567.5L722.6 547.2L722.0 564.4L721.4 564.5L720.8 548.0L720.2 550.0L719.6 553.8L719.0 542.2L718.4 547.4L717.8 564.2L717.2 541.7L716.6 563.9L716.0 538.3L715.4 542.3L714.8 546.5L714.2 545.8L713.6 541.6L713.0 557.4L712.4 541.4L711.8 538.7L711.2 541.8L710.6 564.4L710.0 564.4L709.4 537.8L708.8 561.7L708.2 542.1L707.6 564.4L707.0 548.8L706.4 539.3L705.8 537.9L705.2 541.3L704.6 538.7L704.0 551.0L703.4 555.9L702.8 552.4L702.2 560.9L701.6 557.8L701.0 555.8L700.4 553.2L699.8 554.9L699.2 535.9L698.6 536.7L698.0 557.3L697.4 557.6L696.8 539.7L696.2 557.7L695.6 557.5L695.0 536.3L694.4 556.1L693.8 541.2L693.2 555.6L692.6 551.9L692.0 553.3L691.4 536.6L690.8 555.7L690.2 553.9L689.6 563.4L689.0 556.3L688.4 560.9L687.8 542.2L687.2 537.9L686.6 564.6L686.0 537.9L685.4 540.1L684.8 563.8L684.2 539.4L683.6 540.6L683.0 563.7L682.4 548.9L681.8 559.4L681.2 563.1L680.6 540.1L680.0 543.1L679.4 554.7L678.8 559.4L678.2 542.5L677.6 539.8L677.0 559.3Z" fill="#994100"/>
<path d="M1002.0 475.1L1002.6 460.8L1003.2 461.6L1003.8 461.6L1004.4 475.8L1005.0 474.5L1005.6 463.3L1006.2 463.2L1006.8 475.0L1007.4 467.7L1008.0 459.0L1008.6 475.7L1009.2 476.3L1009.8 472.7L1010.4 454.2L1011.0 469.2L1011.6 478.4L1012.2 478.5L1012.8 477.6L1013.4 470.5L1014.0 461.9L1014.6 476.4L1015.2 472.9L1015.8 459.3L1016.4 475.9L1017.0 458.5L1017.6 464.7L1018.2 474.8L1018.8 466.2L1019.4 456.8L1020.0 472.4L1020.6 451.4L1021.2 472.9L1021.8 475.1L1022.4 472.7L1023.0 462.8L1023.6 472.2L1024.2 454.9L1024.8 455.6L1025.4 469.3L1026.0 476.1L1026.6 474.0L1027.2 474.5L1027.8 475.1L1028.4 475.1L1029.0 474.1L1029.6 477.5L1030.2 462.6L1030.8 462.3L1031.4 457.3L1032.0 477.1L1032.6 455.1L1033.2 459.7L1033.8 469.8L1034.4 475.2L1035.0 452.0L1035.6 467.6L1036.2 474.1L1036.8 454.8L1037.4 456.6L1038.0 464.3L1038.6 461.3L1039.2 454.2L1039.8 472.7L1040.4 471.5L1041.0 466.9L1041.6 458.5L1042.2 460.0L1042.8 475.0L1043.4 459.7L1044.0 476.9L1044.6 464.7L1045.2 457.2L1045.8 466.6L1046.4 474.4L1047.0 475.7L1047.6 473.0L1048.2 471.6L1048.8 461.2L1049.4 473.7L1050.0 461.6L1050.6 454.0L1051.2 457.6L1051.8 467.2L1052.4 455.9L1053.0 471.2L1053.6 467.8L1054.2 476.9L1054.8 476.7L1055.4 459.4L1056.0 473.7L1056.6 476.6L1057.2 476.1L1057.8 464.3L1058.4 478.2L1059.0 474.7L1059.6 472.3L1060.2 477.0L1060.8 461.7L1061.4 476.4L1062.0 465.1L1062.6 464.2L1063.2 460.7L1063.8 473.9L1064.4 475.7L1065.0 475.7L1065.6 472.3L1066.2 450.9L1066.8 450.3L1067.4 450.0L1068.0 469.1L1068.6 472.4L1069.2 464.0L1069.8 464.9L1070.4 458.9L1071.0 456.4L1071.6 450.0L1072.2 460.5L1072.8 471.6L1073.4 453.1L1074.0 475.4L1074.6 453.2L1075.2 470.3L1075.8 464.4L1076.4 465.2L1077.0 463.6L1077.6 477.9L1078.2 474.4L1078.8 469.8L1079.4 459.8L1080.0 458.1L1080.6 460.2L1081.2 474.9L1081.8 476.8L1082.4 476.3L1083.0 457.1L1083.6 469.8L1084.2 465.4L1084.8 473.1L1085.4 470.8L1086.0 470.8L1086.6 452.7L1087.2 448.9L1087.8 467.6L1088.4 451.2L1089.0 460.3L1089.6 473.7L1090.2 468.3L1090.8 473.7L1091.4 473.2L1092.0 463.5L1092.6 472.0L1093.2 456.1L1093.8 465.5L1094.4 471.7L1095.0 464.4L1095.6 453.4L1096.2 455.9L1096.8 471.9L1097.4 469.4L1098.0 468.2L1098.6 455.5L1099.2 467.0L1099.8 450.9L1100.4 468.0L1101.0 453.2L1101.6 467.1L1102.2 459.5L1102.8 471.5L1103.4 470.6L1104.0 466.5L1104.6 473.2L1105.2 469.7L1105.8 464.1L1106.4 465.0L1107.0 473.7L1107.6 475.4L1108.2 464.6L1108.8 457.1L1109.4 466.8L1110.0 469.8L1110.6 475.5L1111.2 473.5L1111.8 469.5L1112.4 477.8L1113.0 475.0L1113.6 471.9L1114.2 476.3L1114.8 458.7L1115.4 468.1L1116.0 478.8L1116.6 475.7L1117.2 478.0L1117.8 456.9L1118.4 458.9L1119.0 471.0L1119.6 455.8L1120.2 475.8L1120.8 452.6L1121.4 471.7L1122.0 474.1L1122.6 468.2L1123.2 475.6L1123.8 459.1L1124.4 463.8L1125.0 452.4L1125.6 472.2L1126.2 468.9L1126.8 469.5L1127.4 449.6L1128.0 472.7L1128.6 452.3L1129.2 453.9L1129.8 452.9L1130.4 467.2L1131.0 453.0L1131.6 458.9L1132.2 456.7L1132.8 459.3L1133.4 474.9L1134.0 455.2L1134.6 461.0L1135.2 463.0L1135.8 478.0L1136.4 478.1L1137.0 456.3L1137.6 456.9L1138.2 455.8L1138.8 459.0L1139.4 472.7L1140.0 476.9L1140.6 459.5L1141.2 474.2L1141.8 463.2L1142.4 459.5L1143.0 477.1L1143.6 475.5L1144.2 465.3L1144.8 457.0L1145.4 466.3L1146.0 471.2L1146.6 463.8L1147.2 451.2L1147.8 471.8L1148.4 474.9L1149.0 467.9L1149.6 466.9L1150.2 476.6L1150.8 460.8L1151.4 469.5L1152.0 452.3L1152.6 473.8L1153.2 452.5L1153.8 474.4L1154.4 469.1L1155.0 454.0L1155.6 474.6L1156.2 461.7L1156.8 467.6L1157.4 470.7L1158.0 460.0L1158.6 457.1L1159.2 471.6L1159.8 474.5L1160.4 454.6L1161.0 456.7L1161.6 476.1L1162.2 478.1L1162.8 463.5L1163.4 464.0L1163.4 563.7L1162.8 542.0L1162.2 538.6L1161.6 563.5L1161.0 540.2L1160.4 542.7L1159.8 561.9L1159.2 556.4L1158.6 543.5L1158.0 542.6L1157.4 559.1L1156.8 561.6L1156.2 544.3L1155.6 546.1L1155.0 551.3L1154.4 550.3L1153.8 541.0L1153.2 547.7L1152.6 554.8L1152.0 546.4L1151.4 554.1L1150.8 538.7L1150.2 555.5L1149.6 559.0L1149.0 545.2L1148.4 561.5L1147.8 539.7L1147.2 560.7L1146.6 548.2L1146.0 540.8L1145.4 543.5L1144.8 540.8L1144.2 561.8L1143.6 553.0L1143.0 537.3L1142.4 556.9L1141.8 554.3L1141.2 558.2L1140.6 540.8L1140.0 542.8L1139.4 547.1L1138.8 549.2L1138.2 537.2L1137.6 537.5L1137.0 534.1L1136.4 556.0L1135.8 538.0L1135.2 558.5L1134.6 547.6L1134.0 541.4L1133.4 543.6L1132.8 539.7L1132.2 543.5L1131.6 537.1L1131.0 550.2L1130.4 538.2L1129.8 540.7L1129.2 548.0L1128.6 538.5L1128.0 539.1L1127.4 552.4L1126.8 546.3L1126.2 537.8L1125.6 536.7L1125.0 544.4L1124.4 555.9L1123.8 558.0L1123.2 538.3L1122.6 556.9L1122.0 543.0L1121.4 543.8L1120.8 553.5L1120.2 557.6L1119.6 549.7L1119.0 535.9L1118.4 542.3L1117.8 534.4L1117.2 552.7L1116.6 554.3L1116.0 552.5L1115.4 534.3L1114.8 540.2L1114.2 559.6L1113.6 553.7L1113.0 560.9L1112.4 555.7L1111.8 543.3L1111.2 557.7L1110.6 552.1L1110.0 542.4L1109.4 564.7L1108.8 551.0L1108.2 547.7L1107.6 544.0L1107.0 556.5L1106.4 543.9L1105.8 559.7L1105.2 544.9L1104.6 548.8L1104.0 552.1L1103.4 551.0L1102.8 541.3L1102.2 538.4L1101.6 555.2L1101.0 561.2L1100.4 541.4L1099.8 543.3L1099.2 553.0L1098.6 553.7L1098.0 545.7L1097.4 537.7L1096.8 549.6L1096.2 555.9L1095.6 550.8L1095.0 541.8L1094.4 540.4L1093.8 541.7L1093.2 558.0L1092.6 540.2L1092.0 544.9L1091.4 552.2L1090.8 563.6L1090.2 557.9L1089.6 557.7L1089.0 546.8L1088.4 544.9L1087.8 555.4L1087.2 559.8L1086.6 556.2L1086.0 565.0L1085.4 540.3L1084.8 557.8L1084.2 554.4L1083.6 542.8L1083.0 544.8L1082.4 548.2L1081.8 564.2L1081.2 549.9L1080.6 543.4L1080.0 550.9L1079.4 550.8L1078.8 556.2L1078.2 545.2L1077.6 562.2L1077.0 562.3L1076.4 545.1L1075.8 560.0L1075.2 542.9L1074.6 539.9L1074.0 541.3L1073.4 562.0L1072.8 551.3L1072.2 540.3L1071.6 543.5L1071.0 546.1L1070.4 551.8L1069.8 561.8L1069.2 557.5L1068.6 565.4L1068.0 545.3L1067.4 566.1L1066.8 552.3L1066.2 557.5L1065.6 559.3L1065.0 540.8L1064.4 555.1L1063.8 541.3L1063.2 560.4L1062.6 552.2L1062.0 551.4L1061.4 539.8L1060.8 542.3L1060.2 547.3L1059.6 541.3L1059.0 540.2L1058.4 541.3L1057.8 542.8L1057.2 544.0L1056.6 550.0L1056.0 548.8L1055.4 540.1L1054.8 539.6L1054.2 558.0L1053.6 547.7L1053.0 540.8L1052.4 544.5L1051.8 537.4L1051.2 554.8L1050.6 559.4L1050.0 535.8L1049.4 535.9L1048.8 538.7L1048.2 535.2L1047.6 541.5L1047.0 540.4L1046.4 536.6L1045.8 546.6L1045.2 538.1L1044.6 538.8L1044.0 539.6L1043.4 538.0L1042.8 553.5L1042.2 543.2L1041.6 543.3L1041.0 554.8L1040.4 562.9L1039.8 560.7L1039.2 562.3L1038.6 561.5L1038.0 537.8L1037.4 553.0L1036.8 550.4L1036.2 556.7L1035.6 542.5L1035.0 543.5L1034.4 539.8L1033.8 547.8L1033.2 544.1L1032.6 561.1L1032.0 558.5L1031.4 540.0L1030.8 560.3L1030.2 548.0L1029.6 539.2L1029.0 561.9L1028.4 543.9L1027.8 558.3L1027.2 538.5L1026.6 541.2L1026.0 557.0L1025.4 536.2L1024.8 537.2L1024.2 551.6L1023.6 557.8L1023.0 556.0L1022.4 556.5L1021.8 538.1L1021.2 536.8L1020.6 552.8L1020.0 536.9L1019.4 538.0L1018.8 557.1L1018.2 561.7L1017.6 559.7L1017.0 552.8L1016.4 546.4L1015.8 538.1L1015.2 551.5L1014.6 551.8L1014.0 542.8L1013.4 559.9L1012.8 539.3L1012.2 557.4L1011.6 552.0L1011.0 558.9L1010.4 539.0L1009.8 560.8L1009.2 550.1L1008.6 558.6L1008.0 563.3L1007.4 540.1L1006.8 561.0L1006.2 539.1L1005.6 546.7L1005.0 560.3L1004.4 556.5L1003.8 541.2L1003.2 544.7L1002.6 549.2L1002.0 545.2Z" fill="#860e4a"/>
<path d="M1164.6 475.5L1165.2 467.5L1165.8 464.5L1166.4 477.0L1167.0 456.7L1167.6 473.0L1168.2 462.5L1168.8 473.7L1169.4 474.2L1170.0 471.6L1170.6 472.4L1171.2 455.1L1171.8 450.6L1172.4 454.3L1173.0 469.4L1173.6 462.9L1174.2 468.5L1174.8 468.8L1175.4 471.3L1176.0 467.8L1176.6 458.0L1177.2 447.1L1177.8 471.3L1178.4 447.3L1179.0 474.6L1179.6 472.3L1180.2 449.8L1180.8 475.9L1181.4 475.1L1182.0 451.4L1182.6 471.6L1183.2 450.9L1183.8 468.4L1184.4 475.3L1185.0 456.4L1185.6 458.9L1186.2 474.5L1186.8 462.1L1187.4 473.5L1188.0 454.9L1188.6 461.9L1189.2 475.8L1189.8 470.9L1190.4 464.4L1191.0 471.5L1191.6 463.7L1192.2 475.6L1192.8 459.5L1193.4 451.2L1194.0 468.7L1194.6 473.1L1195.2 459.7L1195.8 463.8L1196.4 457.8L1197.0 466.0L1197.6 477.7L1198.2 475.7L1198.8 471.0L1199.4 459.1L1200.0 463.4L1200.6 464.6L1201.2 464.9L1201.8 475.1L1202.4 475.2L1203.0 451.1L1203.6 475.6L1204.2 458.5L1204.8 458.8L1205.4 478.3L1206.0 475.9L1206.6 475.5L1207.2 477.4L1207.8 477.2L1208.4 476.1L1209.0 476.2L1209.6 469.6L1210.2 472.7L1210.8 467.3L1211.4 471.3L1212.0 464.5L1212.6 468.5L1213.2 455.8L1213.8 466.1L1214.4 457.2L1215.0 455.9L1215.6 458.1L1216.2 475.9L1216.8 449.1L1217.4 472.8L1218.0 465.2L1218.6 449.5L1219.2 462.7L1219.8 469.5L1220.4 471.8L1221.0 467.9L1221.6 447.5L1222.2 465.9L1222.8 472.3L1223.4 453.9L1224.0 454.1L1224.6 448.8L1225.2 456.9L1225.8 454.9L1226.4 467.0L1227.0 447.4L1227.6 448.7L1228.2 471.6L1228.8 451.0L1229.4 462.3L1230.0 449.1L1230.6 469.8L1231.2 444.6L1231.8 472.4L1232.4 460.8L1233.0 458.5L1233.6 459.3L1234.2 448.4L1234.8 457.6L1235.4 471.7L1236.0 464.7L1236.6 462.4L1237.2 469.6L1237.8 463.1L1238.4 451.1L1239.0 468.6L1239.6 461.1L1240.2 456.9L1240.8 471.2L1241.4 466.4L1242.0 457.9L1242.6 460.0L1243.2 469.3L1243.8 454.6L1244.4 472.4L1245.0 475.3L1245.6 469.4L1246.2 462.7L1246.8 454.2L1247.4 476.8L1248.0 469.0L1248.6 475.2L1249.2 452.9L1249.8 477.0L1250.4 475.6L1251.0 453.1L1251.6 478.4L1252.2 466.7L1252.8 458.4L1253.4 468.3L1254.0 477.4L1254.6 458.1L1255.2 473.5L1255.8 468.0L1256.4 477.0L1257.0 459.0L1257.6 471.6L1258.2 463.1L1258.8 456.8L1259.4 462.5L1260.0 471.2L1260.6 456.3L1261.2 478.1L1261.8 475.1L1262.4 475.1L1263.0 466.1L1263.6 455.7L1264.2 478.0L1264.8 473.3L1265.4 473.0L1266.0 466.0L1266.6 475.1L1267.2 455.7L1267.8 477.0L1268.4 472.5L1269.0 457.3L1269.6 478.9L1270.2 457.5L1270.8 458.2L1271.4 470.8L1272.0 467.1L1272.6 466.0L1273.2 477.1L1273.8 462.9L1274.4 478.1L1275.0 478.2L1275.6 465.5L1276.2 457.9L1276.8 459.8L1277.4 461.4L1278.0 470.1L1278.6 455.2L1279.2 451.4L1279.8 472.9L1280.4 474.3L1281.0 475.8L1281.6 475.9L1282.2 456.1L1282.8 464.7L1283.4 455.4L1284.0 464.8L1284.6 460.7L1285.2 450.1L1285.8 473.8L1286.4 455.4L1287.0 462.1L1287.6 472.6L1288.2 471.0L1288.8 468.1L1289.4 471.9L1290.0 450.4L1290.6 458.6L1291.2 470.1L1291.8 467.3L1292.4 453.4L1293.0 462.3L1293.6 465.5L1294.2 473.5L1294.8 455.0L1295.4 475.5L1296.0 454.5L1296.6 473.9L1297.2 461.2L1297.8 460.6L1298.4 478.1L1299.0 459.3L1299.6 465.8L1300.2 476.5L1300.8 473.1L1301.4 475.8L1302.0 466.1L1302.6 455.2L1303.2 474.3L1303.8 475.3L1304.4 454.0L1305.0 470.2L1305.6 466.7L1306.2 476.6L1306.8 475.8L1307.4 462.5L1308.0 474.5L1308.6 452.4L1309.2 456.8L1309.8 461.3L1310.4 456.4L1311.0 459.4L1311.6 467.1L1312.2 466.8L1312.8 457.3L1313.4 462.9L1314.0 458.3L1314.6 450.3L1315.2 466.2L1315.8 453.0L1316.4 474.2L1317.0 461.8L1317.6 451.2L1318.2 466.7L1318.8 461.1L1319.4 474.2L1320.0 473.9L1320.6 448.6L1321.2 475.7L1321.8 474.8L1322.4 466.0L1323.0 461.0L1323.6 473.9L1324.2 475.6L1324.8 453.8L1325.4 471.3L1326.0 464.7L1326.6 477.4L1327.2 464.8L1327.8 467.0L1328.4 453.4L1329.0 479.5L1329.6 457.5L1330.2 460.0L1330.8 463.2L1331.4 477.9L1332.0 456.3L1332.6 452.2L1333.2 451.8L1333.8 462.8L1334.4 473.4L1335.0 461.3L1335.6 473.3L1336.2 450.6L1336.8 452.6L1337.4 455.3L1338.0 475.3L1338.6 457.7L1339.2 469.1L1339.8 452.3L1340.4 457.5L1341.0 467.7L1341.6 462.9L1342.2 466.0L1342.8 454.2L1343.4 468.3L1344.0 462.4L1344.6 452.4L1345.2 454.8L1345.8 466.5L1346.4 466.4L1347.0 463.7L1347.6 458.4L1348.2 471.3L1348.8 462.4L1349.4 450.8L1350.0 456.8L1350.6 466.2L1351.2 461.9L1351.8 472.8L1352.4 472.3L1353.0 474.9L1353.6 452.1L1354.2 464.2L1354.8 473.2L1355.4 464.3L1356.0 473.0L1356.6 461.5L1357.2 473.9L1357.8 449.3L1358.4 469.1L1359.0 448.3L1359.6 471.7L1360.2 474.9L1360.8 461.5L1361.4 457.1L1362.0 468.1L1362.6 470.4L1363.2 456.0L1363.8 470.3L1364.4 464.2L1365.0 460.2L1365.6 471.6L1366.2 459.0L1366.8 453.0L1367.4 473.2L1368.0 456.8L1368.6 454.9L1369.2 474.2L1369.8 475.3L1370.4 466.8L1371.0 453.9L1371.6 468.8L1372.2 455.9L1372.8 453.6L1373.4 457.3L1374.0 464.3L1374.6 457.5L1375.2 452.3L1375.8 459.1L1376.4 471.9L1377.0 466.5L1377.6 464.5L1378.2 448.4L1378.8 473.2L1379.4 470.8L1380.0 467.4L1380.6 459.9L1381.2 448.8L1381.8 465.8L1382.4 472.3L1383.0 455.6L1383.6 465.7L1384.2 458.0L1384.8 455.7L1385.4 471.5L1386.0 472.9L1386.6 469.7L1387.2 474.1L1387.8 448.6L1388.4 449.5L1389.0 455.2L1389.6 475.7L1390.2 457.5L1390.8 450.5L1391.4 454.2L1392.0 463.7L1392.6 465.6L1393.2 476.8L1393.8 476.9L1394.4 454.8L1395.0 476.3L1395.6 474.4L1396.2 474.7L1396.8 450.9L1397.4 449.3L1398.0 457.1L1398.6 463.9L1399.2 473.8L1399.8 470.9L1400.4 452.3L1401.0 476.2L1401.6 473.9L1402.2 475.0L1402.8 456.0L1403.4 461.8L1404.0 467.7L1404.6 476.4L1405.2 456.2L1405.8 461.4L1406.4 460.4L1407.0 472.9L1407.6 460.6L1408.2 465.6L1408.8 455.2L1409.4 464.9L1410.0 470.5L1410.6 472.4L1411.2 466.8L1411.8 462.8L1412.4 469.4L1413.0 469.8L1413.6 452.3L1414.2 459.7L1414.8 470.0L1415.4 446.6L1416.0 463.4L1416.6 450.0L1417.2 446.2L1417.8 469.9L1418.4 463.6L1419.0 468.4L1419.6 470.8L1420.2 451.3L1420.8 447.7L1421.4 467.5L1422.0 462.3L1422.6 447.9L1423.2 445.8L1423.8 466.0L1424.4 453.9L1425.0 468.6L1425.6 473.0L1426.2 466.2L1426.8 464.4L1427.4 463.8L1428.0 448.3L1428.6 468.7L1429.2 456.9L1429.8 469.8L1430.4 471.7L1431.0 463.3L1431.6 467.6L1432.2 454.0L1432.8 445.1L1433.4 467.9L1434.0 468.5L1434.6 468.2L1435.2 466.6L1435.8 453.1L1436.4 450.3L1437.0 457.1L1437.6 450.2L1438.2 452.1L1438.8 465.9L1439.4 471.4L1440.0 464.0L1440.6 449.0L1441.2 460.7L1441.8 468.7L1442.4 464.5L1443.0 453.4L1443.6 471.8L1444.2 466.5L1444.8 453.3L1445.4 455.4L1446.0 465.4L1446.6 466.9L1447.2 468.8L1447.8 477.0L1448.4 462.8L1449.0 452.1L1449.6 460.5L1450.2 478.1L1450.8 474.6L1451.4 464.4L1452.0 465.8L1452.6 460.1L1453.2 456.7L1453.8 466.7L1454.4 451.9L1455.0 465.5L1455.6 459.1L1456.2 476.1L1456.8 463.2L1457.4 476.7L1458.0 466.7L1458.6 451.3L1459.2 476.7L1459.8 467.2L1460.4 477.7L1461.0 477.2L1461.6 463.3L1462.2 459.6L1462.8 471.0L1463.4 473.7L1464.0 475.1L1464.6 457.9L1465.2 468.7L1465.8 454.6L1466.4 469.8L1467.0 454.8L1467.6 450.0L1468.2 449.4L1468.8 476.6L1469.4 467.5L1470.0 473.5L1470.6 465.8L1471.2 461.0L1471.8 474.5L1472.4 467.6L1473.0 473.5L1473.6 472.9L1474.2 449.0L1474.8 465.3L1475.4 452.2L1476.0 472.1L1476.6 464.6L1477.2 473.1L1477.8 452.8L1478.4 474.8L1479.0 474.3L1479.6 447.2L1480.2 471.8L1480.8 473.1L1481.4 463.6L1482.0 469.7L1482.6 449.0L1483.2 465.0L1483.8 462.5L1484.4 464.3L1485.0 451.1L1485.6 470.8L1486.2 458.1L1486.8 475.9L1487.4 468.9L1488.0 465.7L1488.6 476.3L1489.2 467.7L1489.8 474.4L1490.4 478.3L1491.0 458.3L1491.6 455.2L1492.2 462.9L1492.8 468.8L1493.4 451.1L1494.0 459.1L1494.6 459.3L1495.2 451.5L1495.8 467.4L1496.4 472.8L1497.0 455.5L1497.6 471.9L1498.2 451.4L1498.8 473.5L1499.4 472.0L1500.0 445.9L1500.6 473.1L1501.2 464.4L1501.8 470.2L1502.4 459.3L1503.0 452.9L1503.6 449.9L1504.2 458.0L1504.8 470.4L1505.4 456.7L1506.0 456.6L1506.6 466.5L1507.2 447.5L1507.8 472.1L1508.4 448.2L1509.0 451.8L1509.6 470.4L1510.2 455.5L1510.8 473.4L1511.4 473.6L1512.0 462.6L1512.6 450.6L1513.2 468.0L1513.8 451.5L1514.4 459.1L1515.0 456.1L1515.6 473.1L1516.2 471.4L1516.8 466.0L1517.4 452.3L1518.0 459.9L1518.6 473.1L1519.2 468.4L1519.8 452.0L1520.4 471.4L1521.0 466.6L1521.6 470.4L1522.2 474.0L1522.8 455.3L1523.4 467.9L1524.0 462.7L1524.6 463.1L1525.2 474.2L1525.8 466.7L1526.4 459.3L1527.0 459.1L1527.6 472.5L1528.2 477.8L1528.8 465.3L1529.4 478.0L1530.0 466.1L1530.6 479.0L1531.2 469.8L1531.8 456.7L1532.4 468.4L1533.0 476.0L1533.6 460.9L1534.2 449.8L1534.8 455.4L1535.4 449.8L1536.0 474.0L1536.6 473.9L1537.2 462.9L1537.8 470.7L1538.4 460.7L1539.0 469.5L1539.6 449.1L1540.2 460.6L1540.8 448.0L1541.4 449.9L1542.0 449.8L1542.6 460.5L1543.2 471.1L1543.8 451.8L1544.4 474.9L1545.0 455.0L1545.6 448.7L1546.2 463.7L1546.8 468.8L1547.4 473.9L1548.0 475.5L1548.6 474.3L1549.2 475.0L1549.8 461.7L1550.4 467.6L1551.0 473.5L1551.6 448.9L1552.2 453.9L1552.8 473.2L1553.4 458.7L1554.0 475.0L1554.6 450.9L1555.2 472.6L1555.8 457.9L1556.4 468.8L1557.0 467.9L1557.6 447.5L1558.2 450.6L1558.8 446.8L1559.4 465.9L1560.0 460.7L1560.6 461.9L1561.2 460.7L1561.8 461.1L1562.4 449.6L1563.0 457.5L1563.6 465.9L1564.2 465.2L1564.8 472.4L1565.4 457.5L1566.0 449.5L1566.6 462.6L1567.2 465.7L1567.8 462.3L1568.4 474.4L1569.0 461.6L1569.6 458.6L1570.2 472.8L1570.8 471.4L1571.4 462.3L1572.0 450.6L1572.6 459.4L1573.2 474.0L1573.8 470.5L1574.4 456.5L1575.0 449.9L1575.6 472.0L1576.2 471.8L1576.8 455.7L1577.4 462.6L1578.0 460.8L1578.6 446.8L1579.2 472.0L1579.8 473.1L1580.4 456.2L1581.0 471.4L1581.6 461.1L1582.2 460.1L1582.8 447.5L1583.4 451.8L1584.0 459.3L1584.6 461.3L1585.2 465.2L1585.8 473.6L1586.4 476.1L1587.0 463.0L1587.6 467.3L1588.2 475.1L1588.8 474.2L1589.4 466.0L1590.0 451.9L1590.6 472.4L1591.2 460.3L1591.8 474.0L1592.4 472.0L1593.0 460.6L1593.6 471.5L1594.2 451.7L1594.8 445.9L1595.4 449.8L1596.0 463.1L1596.6 464.3L1597.2 463.3L1597.8 461.6L1598.4 460.2L1599.0 457.7L1599.6 458.3L1600.2 445.9L1600.8 454.2L1601.4 451.1L1602.0 457.9L1602.6 468.6L1603.2 471.1L1603.8 470.8L1604.4 464.6L1605.0 464.3L1605.6 454.1L1606.2 468.3L1606.8 463.0L1607.4 467.3L1608.0 465.4L1608.6 455.4L1609.2 462.3L1609.8 469.9L1610.4 462.2L1611.0 468.8L1611.6 468.3L1612.2 471.6L1612.8 469.7L1613.4 468.5L1614.0 448.0L1614.6 456.5L1615.2 454.4L1615.8 459.0L1616.4 467.4L1617.0 454.9L1617.6 459.0L1618.2 471.0L1618.8 471.7L1619.4 465.5L1620.0 463.1L1620.6 472.7L1621.2 473.3L1621.8 457.2L1622.4 473.8L1623.0 474.1L1623.6 463.6L1624.2 455.3L1624.8 455.1L1625.4 464.1L1626.0 458.3L1626.6 471.0L1627.2 451.6L1627.8 453.0L1628.4 475.1L1629.0 452.1L1629.6 472.3L1630.2 459.6L1630.8 461.4L1631.4 473.5L1632.0 461.8L1632.6 462.0L1633.2 456.2L1633.8 476.2L1634.4 465.0L1635.0 465.8L1635.6 467.4L1636.2 450.1L1636.8 476.2L1637.4 453.3L1638.0 463.1L1638.6 475.1L1639.2 462.8L1639.8 468.6L1640.4 474.3L1641.0 454.3L1641.6 464.1L1642.2 455.5L1642.8 463.8L1643.4 453.3L1644.0 449.0L1644.6 449.9L1645.2 472.4L1645.8 467.1L1646.4 456.3L1647.0 472.3L1647.6 462.5L1648.2 471.8L1648.8 461.3L1649.4 463.2L1650.0 466.2L1650.6 469.2L1651.2 462.4L1651.8 464.4L1652.4 470.5L1653.0 471.3L1653.6 474.4L1654.2 451.4L1654.8 464.0L1655.4 474.7L1656.0 475.7L1656.6 476.3L1657.2 457.3L1657.8 447.9L1658.4 456.9L1659.0 469.3L1659.6 455.2L1660.2 455.6L1660.8 472.7L1661.4 450.2L1662.0 448.6L1662.6 460.4L1663.2 469.6L1663.8 449.4L1664.4 467.4L1665.0 470.5L1665.6 453.4L1666.2 452.0L1666.8 459.7L1667.4 469.2L1668.0 450.7L1668.6 470.3L1669.2 446.1L1669.8 455.0L1670.4 445.3L1671.0 470.3L1671.6 454.6L1672.2 456.5L1672.8 457.1L1673.4 468.4L1674.0 472.7L1674.6 469.3L1675.2 466.6L1675.8 460.4L1676.4 464.4L1677.0 451.0L1677.6 449.8L1678.2 471.3L1678.2 562.3L1677.6 543.3L1677.0 535.2L1676.4 537.7L1675.8 538.3L1675.2 534.4L1674.6 535.1L1674.0 558.9L1673.4 557.2L1672.8 534.8L1672.2 546.1L1671.6 547.0L1671.0 556.2L1670.4 548.5L1669.8 537.9L1669.2 546.9L1668.6 563.4L1668.0 551.2L1667.4 537.5L1666.8 538.4L1666.2 541.1L1665.6 541.3L1665.0 560.1L1664.4 546.8L1663.8 565.2L1663.2 545.4L1662.6 540.5L1662.0 564.0L1661.4 559.8L1660.8 539.2L1660.2 548.8L1659.6 550.3L1659.0 559.4L1658.4 549.0L1657.8 537.3L1657.2 559.7L1656.6 540.7L1656.0 557.8L1655.4 556.4L1654.8 541.1L1654.2 536.3L1653.6 548.5L1653.0 535.0L1652.4 540.5L1651.8 535.7L1651.2 542.8L1650.6 534.7L1650.0 550.5L1649.4 541.1L1648.8 537.3L1648.2 544.0L1647.6 544.1L1647.0 539.4L1646.4 563.0L1645.8 548.9L1645.2 536.4L1644.6 537.1L1644.0 562.9L1643.4 544.7L1642.8 554.9L1642.2 553.8L1641.6 539.4L1641.0 548.7L1640.4 542.6L1639.8 555.0L1639.2 540.7L1638.6 555.2L1638.0 547.3L1637.4 540.5L1636.8 545.1L1636.2 554.8L1635.6 553.4L1635.0 553.1L1634.4 564.2L1633.8 553.8L1633.2 552.6L1632.6 542.9L1632.0 541.5L1631.4 564.6L1630.8 549.3L1630.2 564.4L1629.6 556.1L1629.0 561.6L1628.4 549.3L1627.8 551.0L1627.2 548.3L1626.6 558.7L1626.0 561.1L1625.4 539.0L1624.8 536.9L1624.2 554.8L1623.6 551.9L1623.0 549.1L1622.4 538.5L1621.8 539.5L1621.2 541.4L1620.6 541.7L1620.0 552.9L1619.4 564.3L1618.8 540.9L1618.2 550.1L1617.6 551.8L1617.0 541.3L1616.4 561.6L1615.8 562.1L1615.2 548.0L1614.6 562.3L1614.0 563.5L1613.4 546.1L1612.8 550.4L1612.2 565.7L1611.6 541.9L1611.0 551.6L1610.4 544.1L1609.8 561.2L1609.2 538.4L1608.6 548.5L1608.0 555.0L1607.4 555.0L1606.8 537.1L1606.2 540.9L1605.6 538.3L1605.0 551.4L1604.4 547.4L1603.8 544.9L1603.2 546.4L1602.6 546.3L1602.0 563.8L1601.4 548.6L1600.8 544.4L1600.2 562.4L1599.6 549.6L1599.0 541.8L1598.4 565.1L1597.8 540.6L1597.2 565.1L1596.6 538.8L1596.0 562.4L1595.4 556.9L1594.8 553.5L1594.2 541.9L1593.6 559.0L1593.0 539.5L1592.4 563.8L1591.8 556.5L1591.2 542.4L1590.6 550.3L1590.0 539.2L1589.4 564.9L1588.8 565.7L1588.2 541.6L1587.6 542.6L1587.0 544.8L1586.4 557.8L1585.8 553.7L1585.2 540.7L1584.6 562.0L1584.0 545.5L1583.4 560.7L1582.8 540.8L1582.2 547.4L1581.6 551.2L1581.0 561.3L1580.4 542.2L1579.8 554.3L1579.2 561.4L1578.6 558.5L1578.0 538.7L1577.4 543.0L1576.8 549.5L1576.2 539.0L1575.6 541.4L1575.0 563.0L1574.4 539.9L1573.8 537.8L1573.2 541.3L1572.6 539.0L1572.0 536.5L1571.4 545.3L1570.8 558.5L1570.2 555.5L1569.6 539.2L1569.0 548.1L1568.4 552.2L1567.8 539.0L1567.2 553.0L1566.6 538.1L1566.0 550.4L1565.4 562.4L1564.8 543.7L1564.2 556.1L1563.6 556.5L1563.0 562.0L1562.4 539.6L1561.8 545.7L1561.2 545.2L1560.6 547.4L1560.0 556.4L1559.4 559.9L1558.8 545.1L1558.2 552.2L1557.6 546.7L1557.0 555.3L1556.4 542.4L1555.8 554.4L1555.2 540.5L1554.6 562.3L1554.0 541.4L1553.4 564.1L1552.8 545.8L1552.2 552.9L1551.6 543.6L1551.0 547.0L1550.4 559.1L1549.8 555.9L1549.2 540.9L1548.6 550.4L1548.0 541.0L1547.4 551.4L1546.8 540.1L1546.2 561.8L1545.6 541.8L1545.0 540.5L1544.4 552.1L1543.8 543.6L1543.2 554.5L1542.6 552.3L1542.0 546.2L1541.4 542.3L1540.8 553.7L1540.2 542.6L1539.6 563.9L1539.0 541.1L1538.4 541.7L1537.8 541.1L1537.2 559.1L1536.6 561.2L1536.0 552.0L1535.4 545.7L1534.8 555.7L1534.2 553.5L1533.6 546.1L1533.0 563.8L1532.4 546.8L1531.8 539.5L1531.2 556.4L1530.6 562.8L1530.0 545.9L1529.4 547.4L1528.8 538.1L1528.2 536.0L1527.6 548.8L1527.0 539.3L1526.4 546.7L1525.8 556.8L1525.2 540.8L1524.6 552.6L1524.0 562.7L1523.4 536.5L1522.8 551.0L1522.2 551.2L1521.6 549.2L1521.0 537.4L1520.4 538.5L1519.8 540.2L1519.2 552.2L1518.6 539.6L1518.0 541.1L1517.4 561.3L1516.8 559.3L1516.2 556.9L1515.6 559.2L1515.0 553.2L1514.4 545.0L1513.8 537.3L1513.2 538.9L1512.6 550.6L1512.0 546.0L1511.4 544.0L1510.8 547.9L1510.2 538.2L1509.6 540.5L1509.0 537.6L1508.4 554.9L1507.8 551.8L1507.2 543.8L1506.6 560.7L1506.0 551.7L1505.4 555.9L1504.8 555.4L1504.2 537.7L1503.6 550.6L1503.0 559.5L1502.4 543.5L1501.8 536.4L1501.2 534.5L1500.6 540.1L1500.0 560.1L1499.4 556.6L1498.8 534.6L1498.2 541.0L1497.6 537.5L1497.0 557.3L1496.4 547.1L1495.8 563.6L1495.2 537.1L1494.6 545.3L1494.0 538.2L1493.4 541.3L1492.8 549.2L1492.2 540.8L1491.6 539.1L1491.0 544.8L1490.4 553.0L1489.8 539.9L1489.2 552.4L1488.6 539.7L1488.0 555.1L1487.4 538.0L1486.8 561.6L1486.2 538.9L1485.6 557.6L1485.0 539.3L1484.4 549.4L1483.8 555.6L1483.2 553.3L1482.6 557.1L1482.0 553.6L1481.4 545.0L1480.8 549.2L1480.2 548.1L1479.6 538.0L1479.0 542.1L1478.4 552.1L1477.8 539.0L1477.2 538.5L1476.6 546.4L1476.0 536.3L1475.4 548.9L1474.8 557.6L1474.2 552.2L1473.6 540.8L1473.0 555.4L1472.4 535.2L1471.8 533.6L1471.2 552.8L1470.6 534.5L1470.0 556.4L1469.4 560.0L1468.8 535.4L1468.2 561.4L1467.6 535.5L1467.0 550.2L1466.4 562.9L1465.8 561.6L1465.2 553.0L1464.6 537.4L1464.0 541.8L1463.4 541.0L1462.8 550.2L1462.2 550.4L1461.6 545.6L1461.0 545.6L1460.4 538.3L1459.8 541.1L1459.2 547.0L1458.6 540.8L1458.0 554.4L1457.4 541.4L1456.8 544.9L1456.2 541.2L1455.6 548.1L1455.0 542.0L1454.4 563.3L1453.8 560.6L1453.2 562.9L1452.6 558.5L1452.0 565.1L1451.4 541.2L1450.8 559.3L1450.2 543.9L1449.6 556.5L1449.0 540.7L1448.4 552.0L1447.8 550.8L1447.2 541.1L1446.6 560.4L1446.0 538.5L1445.4 536.6L1444.8 543.4L1444.2 557.8L1443.6 553.7L1443.0 559.1L1442.4 537.1L1441.8 559.1L1441.2 550.5L1440.6 538.8L1440.0 537.6L1439.4 550.7L1438.8 540.3L1438.2 540.4L1437.6 539.5L1437.0 540.4L1436.4 545.8L1435.8 539.6L1435.2 550.8L1434.6 538.6L1434.0 556.3L1433.4 564.3L1432.8 555.0L1432.2 545.4L1431.6 565.5L1431.0 539.1L1430.4 540.7L1429.8 538.7L1429.2 543.7L1428.6 551.5L1428.0 539.8L1427.4 558.6L1426.8 544.2L1426.2 559.2L1425.6 547.9L1425.0 554.9L1424.4 550.3L1423.8 560.7L1423.2 554.8L1422.6 561.9L1422.0 546.9L1421.4 547.1L1420.8 541.8L1420.2 544.0L1419.6 553.4L1419.0 554.7L1418.4 541.2L1417.8 555.4L1417.2 540.0L1416.6 558.8L1416.0 547.7L1415.4 542.4L1414.8 550.7L1414.2 543.2L1413.6 561.8L1413.0 542.9L1412.4 555.1L1411.8 560.6L1411.2 560.1L1410.6 540.9L1410.0 549.5L1409.4 536.8L1408.8 548.0L1408.2 535.7L1407.6 545.3L1407.0 545.7L1406.4 554.9L1405.8 536.3L1405.2 555.0L1404.6 536.1L1404.0 555.7L1403.4 554.9L1402.8 553.6L1402.2 536.4L1401.6 534.5L1401.0 542.5L1400.4 547.8L1399.8 551.8L1399.2 535.9L1398.6 548.2L1398.0 553.5L1397.4 561.2L1396.8 545.8L1396.2 538.0L1395.6 538.4L1395.0 538.2L1394.4 535.4L1393.8 536.4L1393.2 554.6L1392.6 538.3L1392.0 558.3L1391.4 549.1L1390.8 556.4L1390.2 554.7L1389.6 553.8L1389.0 536.3L1388.4 557.2L1387.8 534.3L1387.2 560.2L1386.6 546.1L1386.0 557.3L1385.4 537.8L1384.8 540.6L1384.2 561.0L1383.6 552.1L1383.0 548.7L1382.4 538.1L1381.8 559.7L1381.2 550.8L1380.6 556.0L1380.0 548.5L1379.4 540.0L1378.8 538.6L1378.2 561.1L1377.6 543.3L1377.0 542.3L1376.4 557.8L1375.8 563.3L1375.2 541.1L1374.6 558.6L1374.0 547.5L1373.4 543.0L1372.8 542.8L1372.2 554.4L1371.6 536.5L1371.0 536.8L1370.4 557.1L1369.8 545.3L1369.2 534.5L1368.6 556.7L1368.0 553.6L1367.4 541.4L1366.8 545.2L1366.2 542.1L1365.6 536.0L1365.0 544.0L1364.4 543.1L1363.8 538.9L1363.2 542.1L1362.6 548.5L1362.0 551.0L1361.4 562.2L1360.8 538.8L1360.2 549.7L1359.6 560.0L1359.0 544.3L1358.4 552.7L1357.8 554.4L1357.2 551.1L1356.6 552.0L1356.0 542.6L1355.4 564.6L1354.8 540.5L1354.2 561.5L1353.6 559.8L1353.0 561.4L1352.4 540.0L1351.8 538.5L1351.2 541.2L1350.6 544.8L1350.0 562.6L1349.4 538.1L1348.8 538.2L1348.2 557.3L1347.6 537.0L1347.0 539.7L1346.4 538.5L1345.8 541.5L1345.2 546.3L1344.6 557.8L1344.0 545.3L1343.4 560.6L1342.8 554.8L1342.2 537.2L1341.6 540.8L1341.0 544.2L1340.4 558.4L1339.8 538.0L1339.2 551.8L1338.6 560.7L1338.0 562.9L1337.4 560.3L1336.8 539.7L1336.2 543.3L1335.6 560.2L1335.0 559.8L1334.4 545.8L1333.8 538.3L1333.2 561.6L1332.6 545.6L1332.0 553.9L1331.4 549.2L1330.8 542.3L1330.2 555.9L1329.6 549.7L1329.0 540.4L1328.4 548.2L1327.8 554.2L1327.2 566.8L1326.6 539.8L1326.0 541.8L1325.4 556.2L1324.8 554.9L1324.2 564.6L1323.6 539.8L1323.0 554.8L1322.4 558.3L1321.8 547.9L1321.2 544.6L1320.6 553.5L1320.0 560.5L1319.4 537.5L1318.8 553.7L1318.2 547.6L1317.6 553.1L1317.0 563.8L1316.4 549.4L1315.8 541.8L1315.2 541.4L1314.6 541.0L1314.0 544.2L1313.4 546.2L1312.8 541.1L1312.2 564.1L1311.6 539.7L1311.0 541.6L1310.4 560.0L1309.8 549.2L1309.2 561.1L1308.6 558.2L1308.0 542.1L1307.4 545.9L1306.8 557.7L1306.2 538.7L1305.6 561.4L1305.0 537.3L1304.4 560.2L1303.8 555.9L1303.2 541.2L1302.6 553.6L1302.0 544.6L1301.4 535.5L1300.8 553.8L1300.2 535.8L1299.6 560.3L1299.0 544.5L1298.4 543.7L1297.8 538.8L1297.2 547.0L1296.6 554.1L1296.0 541.6L1295.4 550.4L1294.8 540.9L1294.2 539.9L1293.6 537.7L1293.0 556.8L1292.4 543.4L1291.8 555.4L1291.2 545.5L1290.6 545.6L1290.0 540.1L1289.4 540.2L1288.8 539.7L1288.2 549.8L1287.6 543.7L1287.0 542.6L1286.4 548.9L1285.8 539.4L1285.2 555.1L1284.6 540.0L1284.0 543.0L1283.4 543.4L1282.8 540.4L1282.2 542.5L1281.6 562.9L1281.0 545.8L1280.4 547.8L1279.8 553.5L1279.2 559.8L1278.6 559.8L1278.0 547.4L1277.4 542.1L1276.8 550.2L1276.2 555.4L1275.6 545.1L1275.0 553.8L1274.4 560.4L1273.8 550.5L1273.2 550.0L1272.6 545.1L1272.0 555.0L1271.4 559.9L1270.8 559.2L1270.2 534.0L1269.6 535.9L1269.0 536.3L1268.4 546.2L1267.8 536.4L1267.2 534.9L1266.6 555.5L1266.0 553.5L1265.4 554.3L1264.8 545.2L1264.2 553.3L1263.6 564.3L1263.0 550.6L1262.4 555.0L1261.8 563.7L1261.2 550.8L1260.6 558.4L1260.0 543.0L1259.4 542.8L1258.8 562.5L1258.2 550.8L1257.6 551.7L1257.0 560.8L1256.4 559.5L1255.8 541.2L1255.2 557.0L1254.6 560.7L1254.0 549.5L1253.4 541.1L1252.8 541.6L1252.2 561.6L1251.6 547.3L1251.0 551.4L1250.4 540.6L1249.8 542.2L1249.2 538.3L1248.6 542.7L1248.0 536.9L1247.4 536.6L1246.8 549.9L1246.2 560.3L1245.6 540.3L1245.0 539.8L1244.4 538.7L1243.8 548.2L1243.2 559.3L1242.6 557.9L1242.0 544.5L1241.4 539.8L1240.8 540.8L1240.2 543.3L1239.6 541.8L1239.0 539.6L1238.4 557.3L1237.8 559.2L1237.2 555.8L1236.6 539.3L1236.0 561.6L1235.4 556.4L1234.8 540.8L1234.2 547.8L1233.6 563.0L1233.0 539.9L1232.4 546.9L1231.8 541.6L1231.2 551.7L1230.6 559.9L1230.0 549.2L1229.4 555.6L1228.8 565.7L1228.2 560.0L1227.6 553.1L1227.0 564.2L1226.4 547.2L1225.8 549.3L1225.2 535.9L1224.6 535.6L1224.0 542.0L1223.4 538.9L1222.8 554.9L1222.2 544.2L1221.6 544.4L1221.0 543.9L1220.4 537.7L1219.8 560.0L1219.2 561.8L1218.6 559.0L1218.0 548.4L1217.4 555.9L1216.8 541.9L1216.2 538.3L1215.6 538.0L1215.0 555.4L1214.4 542.4L1213.8 545.3L1213.2 557.5L1212.6 548.1L1212.0 563.2L1211.4 556.6L1210.8 541.9L1210.2 550.6L1209.6 550.6L1209.0 550.6L1208.4 538.8L1207.8 539.1L1207.2 560.1L1206.6 553.9L1206.0 559.5L1205.4 555.0L1204.8 562.2L1204.2 553.8L1203.6 535.9L1203.0 554.3L1202.4 553.8L1201.8 538.4L1201.2 542.7L1200.6 540.2L1200.0 539.2L1199.4 539.8L1198.8 542.0L1198.2 564.4L1197.6 547.6L1197.0 539.6L1196.4 541.9L1195.8 540.5L1195.2 555.3L1194.6 541.5L1194.0 541.3L1193.4 542.5L1192.8 546.7L1192.2 547.2L1191.6 540.7L1191.0 561.2L1190.4 546.6L1189.8 543.7L1189.2 543.3L1188.6 551.6L1188.0 550.1L1187.4 540.0L1186.8 560.9L1186.2 539.7L1185.6 539.3L1185.0 539.0L1184.4 562.5L1183.8 536.7L1183.2 559.6L1182.6 558.3L1182.0 558.2L1181.4 535.7L1180.8 547.2L1180.2 538.7L1179.6 554.6L1179.0 541.8L1178.4 564.0L1177.8 553.6L1177.2 552.1L1176.6 540.3L1176.0 545.2L1175.4 546.2L1174.8 553.8L1174.2 539.5L1173.6 559.1L1173.0 551.4L1172.4 549.1L1171.8 542.1L1171.2 544.6L1170.6 564.2L1170.0 553.4L1169.4 541.7L1168.8 546.0L1168.2 543.8L1167.6 542.9L1167.0 566.1L1166.4 552.8L1165.8 564.0L1165.2 563.0L1164.6 543.7Z" fill="#994100"/>
<path d="M1679.5 452.4L1680.1 470.5L1680.7 469.5L1681.3 474.5L1681.9 477.7L1682.5 465.0L1683.1 470.7L1683.7 454.0L1684.3 469.3L1684.9 472.8L1685.5 464.0L1686.1 472.6L1686.7 454.1L1687.3 459.2L1687.9 448.6L1688.5 472.6L1689.1 470.8L1689.7 464.5L1690.3 459.9L1690.9 468.0L1691.5 454.0L1692.1 453.0L1692.7 472.5L1693.3 451.2L1693.9 456.5L1694.5 453.3L1695.1 463.3L1695.7 466.1L1696.3 451.5L1696.9 453.4L1697.5 471.9L1698.1 459.4L1698.7 454.2L1699.3 447.5L1699.9 472.4L1700.5 468.5L1701.1 450.7L1701.7 459.1L1702.3 458.4L1702.9 455.4L1703.5 475.8L1704.1 466.9L1704.7 452.5L1705.3 467.8L1705.9 476.3L1706.5 478.8L1707.1 477.5L1707.7 479.8L1708.3 454.0L1708.9 470.8L1709.5 473.5L1710.1 465.1L1710.7 478.3L1711.3 460.2L1711.9 463.5L1712.5 470.8L1713.1 479.4L1713.7 457.1L1714.3 479.6L1714.9 476.0L1715.5 461.3L1716.1 478.6L1716.7 468.1L1717.3 477.8L1717.9 478.1L1718.5 475.9L1719.1 464.5L1719.7 462.3L1720.3 452.2L1720.9 474.7L1721.5 457.0L1722.1 475.3L1722.7 465.4L1723.3 475.4L1723.9 460.4L1724.5 451.1L1725.1 463.1L1725.7 461.8L1726.3 452.5L1726.9 462.1L1727.5 474.8L1728.1 471.4L1728.7 455.1L1729.3 475.3L1729.9 475.2L1730.5 450.9L1731.1 453.5L1731.7 472.8L1732.3 471.6L1732.9 462.3L1733.5 452.7L1734.1 474.3L1734.7 461.8L1735.3 464.8L1735.9 478.7L1736.5 467.8L1737.1 476.8L1737.7 470.3L1738.3 453.8L1738.9 476.3L1739.5 476.5L1740.1 463.3L1740.7 475.3L1741.3 465.6L1741.9 453.0L1742.5 476.4L1743.1 449.1L1743.7 453.0L1744.3 468.5L1744.9 467.7L1745.5 456.4L1746.1 471.8L1746.7 469.1L1747.3 448.7L1747.9 461.5L1748.5 449.3L1749.1 452.6L1749.7 448.5L1750.3 453.8L1750.9 455.6L1751.5 464.9L1752.1 460.9L1752.7 467.5L1753.3 448.1L1753.9 474.2L1754.5 448.1L1755.1 468.5L1755.7 462.0L1756.3 461.1L1756.9 457.3L1757.5 473.5L1758.1 475.0L1758.7 462.2L1759.3 458.9L1759.9 474.8L1760.5 450.4L1761.1 472.3L1761.7 452.8L1762.3 469.2L1762.9 457.9L1763.5 460.5L1764.1 474.4L1764.7 475.3L1765.3 477.7L1765.9 478.2L1766.5 468.7L1767.1 476.7L1767.7 466.5L1768.3 476.1L1768.9 456.1L1769.5 455.2L1770.1 467.3L1770.7 477.3L1771.3 477.0L1771.9 458.8L1772.5 456.2L1773.1 463.5L1773.7 456.6L1774.3 458.3L1774.9 473.2L1775.5 460.1L1776.1 476.0L1776.7 473.5L1777.3 473.6L1777.9 471.1L1778.5 463.8L1779.1 450.2L1779.7 467.2L1780.3 469.6L1780.9 464.4L1781.5 477.6L1782.1 455.3L1782.7 476.5L1783.3 467.1L1783.9 455.2L1784.5 463.4L1785.1 454.5L1785.7 471.9L1786.3 460.9L1786.9 462.5L1787.5 470.8L1788.1 456.8L1788.7 462.0L1789.3 451.4L1789.9 465.0L1790.5 475.0L1791.1 452.1L1791.7 467.8L1792.3 459.8L1792.9 463.8L1793.5 469.5L1794.1 469.8L1794.7 447.7L1795.3 471.7L1795.9 469.5L1796.5 459.6L1797.1 450.5L1797.7 447.0L1798.3 468.3L1798.9 461.1L1799.5 471.1L1800.1 455.9L1800.7 465.8L1801.3 464.1L1801.9 448.5L1802.5 451.7L1803.1 456.2L1803.7 454.7L1804.3 473.8L1804.9 465.5L1805.5 472.0L1806.1 453.3L1806.7 473.6L1807.3 452.5L1807.9 461.3L1808.5 452.6L1809.1 472.4L1809.7 449.5L1810.3 457.4L1810.9 470.1L1811.5 474.2L1812.1 473.1L1812.7 462.1L1813.3 473.1L1813.9 456.9L1814.5 473.8L1815.1 471.0L1815.7 464.5L1816.3 471.0L1816.9 447.7L1817.5 465.0L1818.1 447.8L1818.7 474.4L1819.3 451.9L1819.9 448.8L1820.5 455.0L1821.1 454.1L1821.7 460.3L1822.3 447.4L1822.9 463.6L1823.5 473.6L1824.1 457.5L1824.7 452.6L1825.3 473.0L1825.9 449.8L1826.5 450.1L1827.1 461.0L1827.7 462.1L1828.3 474.2L1828.9 455.0L1829.5 463.6L1830.1 476.4L1830.7 460.8L1831.3 474.8L1831.9 452.0L1832.5 453.5L1833.1 460.2L1833.7 475.7L1834.3 473.6L1834.9 461.3L1835.5 461.7L1836.1 461.1L1836.7 477.0L1837.3 476.6L1837.9 468.4L1838.5 452.7L1839.1 473.0L1839.7 460.7L1840.3 472.7L1840.9 448.6L1841.5 471.4L1842.1 464.0L1842.7 453.8L1843.3 472.0L1843.9 472.6L1844.5 449.7L1845.1 452.2L1845.7 452.0L1846.3 446.7L1846.9 466.2L1847.5 470.8L1848.1 463.4L1848.7 462.2L1849.3 469.7L1849.9 458.1L1850.5 458.8L1851.1 473.0L1851.7 457.4L1852.3 470.2L1852.9 446.2L1853.5 459.6L1854.1 471.0L1854.7 463.1L1855.3 449.9L1855.9 473.4L1856.5 474.1L1857.1 474.3L1857.7 468.1L1858.3 467.5L1858.9 463.7L1859.5 466.1L1860.1 460.3L1860.7 475.3L1861.3 460.9L1861.9 474.3L1862.5 473.2L1863.1 456.8L1863.7 466.5L1864.3 453.9L1864.9 456.5L1865.5 455.6L1866.1 473.8L1866.7 462.2L1867.3 454.7L1867.9 460.8L1868.5 460.7L1869.1 459.4L1869.7 467.5L1870.3 473.0L1870.9 467.6L1871.5 474.6L1872.1 465.6L1872.7 462.1L1873.3 463.4L1873.9 457.4L1874.5 451.5L1875.1 460.3L1875.7 472.5L1876.3 465.7L1876.9 470.9L1877.5 474.0L1878.1 460.6L1878.7 460.3L1879.3 458.2L1879.9 461.5L1880.5 457.2L1881.1 449.2L1881.7 462.2L1882.3 459.5L1882.9 464.9L1883.5 458.9L1884.1 474.9L1884.7 474.3L1885.3 474.6L1885.9 468.9L1886.5 474.1L1887.1 468.7L1887.7 453.6L1888.3 458.0L1888.9 462.4L1889.5 460.3L1890.1 450.5L1890.7 452.5L1891.3 459.1L1891.9 469.4L1892.5 470.9L1893.1 473.1L1893.7 454.8L1894.3 461.6L1894.9 472.9L1895.5 458.4L1896.1 454.7L1896.7 473.6L1897.3 460.1L1897.9 452.1L1898.5 455.8L1899.1 463.0L1899.7 448.8L1900.3 473.6L1900.9 465.0L1901.5 474.5L1902.1 455.5L1902.7 469.2L1903.3 475.1L1903.9 461.1L1904.5 469.3L1905.1 455.6L1905.7 451.6L1906.3 470.7L1906.9 452.5L1907.5 475.8L1908.1 459.9L1908.7 457.2L1909.3 473.5L1909.9 456.1L1910.5 475.7L1911.1 453.1L1911.7 475.5L1912.3 464.6L1912.9 462.9L1913.5 465.4L1914.1 461.3L1914.7 475.4L1915.3 468.6L1915.3 560.6L1914.7 545.7L1914.1 554.2L1913.5 542.6L1912.9 551.9L1912.3 566.1L1911.7 549.9L1911.1 565.2L1910.5 557.8L1909.9 551.0L1909.3 546.7L1908.7 557.1L1908.1 560.9L1907.5 555.4L1906.9 549.5L1906.3 548.4L1905.7 539.7L1905.1 541.5L1904.5 538.1L1903.9 540.2L1903.3 547.8L1902.7 562.0L1902.1 546.6L1901.5 558.5L1900.9 542.0L1900.3 548.7L1899.7 560.3L1899.1 537.0L1898.5 552.9L1897.9 543.5L1897.3 539.3L1896.7 538.3L1896.1 555.4L1895.5 548.6L1894.9 537.7L1894.3 541.2L1893.7 564.0L1893.1 547.9L1892.5 541.0L1891.9 552.3L1891.3 538.6L1890.7 551.9L1890.1 538.5L1889.5 543.2L1888.9 552.9L1888.3 541.1L1887.7 560.7L1887.1 561.2L1886.5 541.7L1885.9 556.7L1885.3 552.2L1884.7 539.7L1884.1 552.4L1883.5 541.7L1882.9 556.7L1882.3 562.4L1881.7 564.9L1881.1 543.0L1880.5 559.3L1879.9 567.7L1879.3 547.8L1878.7 543.0L1878.1 541.8L1877.5 540.8L1876.9 545.1L1876.3 539.0L1875.7 538.3L1875.1 545.5L1874.5 550.3L1873.9 538.4L1873.3 552.6L1872.7 544.4L1872.1 559.3L1871.5 551.6L1870.9 547.8L1870.3 535.2L1869.7 553.0L1869.1 545.0L1868.5 559.1L1867.9 535.2L1867.3 559.6L1866.7 536.2L1866.1 542.2L1865.5 561.0L1864.9 540.6L1864.3 553.3L1863.7 561.1L1863.1 561.4L1862.5 546.5L1861.9 541.3L1861.3 553.2L1860.7 536.5L1860.1 540.8L1859.5 542.0L1858.9 549.5L1858.3 549.4L1857.7 546.8L1857.1 559.9L1856.5 551.8L1855.9 546.2L1855.3 535.8L1854.7 547.0L1854.1 546.0L1853.5 537.6L1852.9 542.3L1852.3 538.9L1851.7 553.3L1851.1 558.4L1850.5 537.1L1849.9 545.5L1849.3 542.6L1848.7 535.8L1848.1 550.8L1847.5 538.4L1846.9 536.1L1846.3 553.6L1845.7 550.0L1845.1 545.8L1844.5 550.9L1843.9 547.0L1843.3 551.4L1842.7 547.0L1842.1 554.8L1841.5 550.8L1840.9 536.0L1840.3 552.9L1839.7 562.2L1839.1 548.5L1838.5 539.5L1837.9 535.7L1837.3 557.5L1836.7 548.1L1836.1 543.1L1835.5 547.0L1834.9 551.2L1834.3 534.7L1833.7 536.7L1833.1 538.4L1832.5 536.3L1831.9 546.8L1831.3 538.1L1830.7 554.6L1830.1 534.1L1829.5 537.6L1828.9 554.1L1828.3 542.7L1827.7 539.2L1827.1 537.0L1826.5 557.8L1825.9 546.2L1825.3 550.5L1824.7 559.2L1824.1 555.3L1823.5 551.0L1822.9 556.7L1822.3 544.6L1821.7 556.7L1821.1 536.1L1820.5 534.6L1819.9 536.0L1819.3 562.0L1818.7 551.3L1818.1 536.8L1817.5 562.2L1816.9 548.0L1816.3 538.1L1815.7 537.8L1815.1 551.0L1814.5 562.4L1813.9 550.3L1813.3 564.1L1812.7 557.5L1812.1 548.1L1811.5 544.2L1810.9 549.8L1810.3 538.4L1809.7 546.5L1809.1 558.0L1808.5 542.0L1807.9 553.7L1807.3 560.4L1806.7 553.9L1806.1 565.3L1805.5 556.8L1804.9 553.1L1804.3 541.2L1803.7 544.7L1803.1 560.0L1802.5 551.0L1801.9 548.3L1801.3 542.9L1800.7 541.1L1800.1 543.3L1799.5 542.0L1798.9 552.5L1798.3 558.3L1797.7 548.0L1797.1 547.1L1796.5 549.5L1795.9 553.3L1795.3 545.3L1794.7 540.1L1794.1 554.2L1793.5 551.7L1792.9 545.6L1792.3 537.2L1791.7 539.4L1791.1 560.0L1790.5 548.1L1789.9 541.1L1789.3 564.4L1788.7 556.6L1788.1 539.1L1787.5 548.0L1786.9 553.2L1786.3 539.0L1785.7 541.5L1785.1 552.2L1784.5 546.7L1783.9 566.1L1783.3 547.7L1782.7 561.4L1782.1 540.2L1781.5 540.6L1780.9 565.7L1780.3 547.8L1779.7 553.1L1779.1 538.6L1778.5 564.6L1777.9 551.3L1777.3 541.1L1776.7 557.8L1776.1 539.7L1775.5 551.9L1774.9 546.5L1774.3 561.9L1773.7 558.3L1773.1 550.0L1772.5 552.0L1771.9 539.2L1771.3 558.0L1770.7 537.9L1770.1 550.5L1769.5 540.2L1768.9 539.3L1768.3 537.8L1767.7 555.6L1767.1 563.3L1766.5 557.9L1765.9 563.3L1765.3 557.4L1764.7 537.5L1764.1 540.1L1763.5 552.2L1762.9 539.7L1762.3 547.1L1761.7 536.4L1761.1 543.0L1760.5 536.2L1759.9 551.0L1759.3 542.5L1758.7 541.4L1758.1 547.3L1757.5 536.4L1756.9 556.0L1756.3 552.1L1755.7 550.5L1755.1 552.9L1754.5 547.6L1753.9 550.8L1753.3 555.4L1752.7 553.2L1752.1 558.6L1751.5 560.5L1750.9 552.2L1750.3 550.4L1749.7 546.4L1749.1 561.3L1748.5 561.2L1747.9 559.1L1747.3 536.7L1746.7 536.5L1746.1 551.1L1745.5 559.6L1744.9 553.2L1744.3 550.4L1743.7 561.2L1743.1 544.7L1742.5 557.3L1741.9 555.5L1741.3 545.7L1740.7 558.5L1740.1 543.1L1739.5 548.2L1738.9 552.2L1738.3 539.1L1737.7 561.4L1737.1 562.9L1736.5 554.3L1735.9 539.8L1735.3 554.2L1734.7 550.0L1734.1 542.7L1733.5 548.6L1732.9 543.5L1732.3 542.3L1731.7 537.2L1731.1 554.0L1730.5 541.9L1729.9 557.2L1729.3 548.3L1728.7 540.0L1728.1 548.8L1727.5 547.6L1726.9 538.6L1726.3 557.0L1725.7 562.6L1725.1 535.6L1724.5 554.3L1723.9 540.5L1723.3 546.1L1722.7 539.1L1722.1 548.8L1721.5 554.5L1720.9 548.8L1720.3 535.1L1719.7 544.5L1719.1 555.7L1718.5 545.1L1717.9 535.6L1717.3 537.7L1716.7 545.7L1716.1 559.7L1715.5 548.9L1714.9 548.0L1714.3 551.8L1713.7 536.8L1713.1 539.2L1712.5 536.2L1711.9 540.9L1711.3 555.4L1710.7 556.9L1710.1 547.9L1709.5 551.0L1708.9 540.2L1708.3 540.1L1707.7 539.2L1707.1 547.0L1706.5 555.5L1705.9 551.4L1705.3 540.9L1704.7 555.2L1704.1 563.2L1703.5 541.5L1702.9 562.1L1702.3 538.5L1701.7 540.0L1701.1 559.1L1700.5 559.0L1699.9 557.9L1699.3 554.3L1698.7 558.6L1698.1 562.5L1697.5 547.3L1696.9 542.4L1696.3 551.6L1695.7 561.7L1695.1 547.8L1694.5 538.1L1693.9 539.7L1693.3 538.3L1692.7 555.1L1692.1 554.5L1691.5 548.3L1690.9 538.8L1690.3 540.8L1689.7 538.1L1689.1 550.0L1688.5 545.5L1687.9 542.8L1687.3 540.0L1686.7 541.1L1686.1 537.7L1685.5 535.0L1684.9 535.2L1684.3 537.2L1683.7 556.8L1683.1 541.2L1682.5 549.8L1681.9 540.9L1681.3 536.3L1680.7 551.1L1680.1 553.1L1679.5 555.5Z" fill="#807301"/>
<path d="M1917.1 458.1L1917.7 458.6L1918.3 477.6L1918.9 451.6L1919.5 466.3L1920.1 451.3L1920.7 458.5L1921.3 470.0L1921.9 453.7L1922.5 462.8L1923.1 454.8L1923.7 466.4L1924.3 469.1L1924.9 468.5L1925.5 446.4L1926.1 460.3L1926.7 470.9L1927.3 471.5L1927.9 465.7L1928.5 466.8L1929.1 450.7L1929.7 457.1L1930.3 457.7L1930.9 447.6L1931.5 460.8L1932.1 458.9L1932.7 470.1L1933.3 449.4L1933.9 450.0L1934.5 459.5L1935.1 455.0L1935.7 448.3L1936.3 460.1L1936.9 454.9L1937.5 471.4L1938.1 448.3L1938.7 456.6L1939.3 474.2L1939.9 465.0L1940.5 460.3L1941.1 468.0L1941.7 466.5L1942.3 461.4L1942.9 453.9L1943.5 465.3L1944.1 476.6L1944.7 449.9L1945.3 450.5L1945.9 451.6L1946.5 461.6L1947.1 472.9L1947.7 452.2L1948.3 477.1L1948.9 473.3L1949.5 467.3L1950.1 469.6L1950.7 472.1L1951.3 452.6L1951.9 462.0L1952.5 464.3L1953.1 453.6L1953.7 473.0L1954.3 455.1L1954.9 462.1L1955.5 466.5L1956.1 460.5L1956.7 450.2L1957.3 458.9L1957.9 466.4L1958.5 474.0L1959.1 468.5L1959.7 474.1L1960.3 453.5L1960.9 471.1L1961.5 474.7L1962.1 454.8L1962.7 454.5L1963.3 471.8L1963.9 480.3L1964.5 452.5L1965.1 462.2L1965.7 484.2L1966.3 466.6L1966.9 457.2L1967.5 489.0L1968.1 472.3L1968.7 475.6L1969.3 474.7L1969.9 455.2L1970.5 472.6L1971.1 452.2L1971.7 486.7L1972.3 474.7L1972.9 472.2L1973.5 463.3L1974.1 472.4L1974.7 467.3L1975.3 454.9L1975.9 485.3L1976.5 487.1L1977.1 475.9L1977.7 483.5L1978.3 480.9L1978.9 456.9L1979.5 470.9L1980.1 488.7L1980.7 471.4L1981.3 460.8L1981.9 460.9L1982.5 459.9L1983.1 475.5L1983.7 490.1L1984.3 469.9L1984.9 490.9L1985.5 488.5L1986.1 460.4L1986.7 466.7L1987.3 490.0L1987.9 470.3L1988.5 491.3L1989.1 477.0L1989.7 477.3L1990.3 467.5L1990.9 475.7L1991.5 466.4L1992.1 469.6L1992.7 460.0L1993.3 491.7L1993.9 483.0L1994.5 471.7L1995.1 465.5L1995.7 458.3L1996.3 474.3L1996.9 464.7L1997.5 480.6L1998.1 491.4L1998.7 465.8L1999.3 476.5L1999.9 466.4L2000.5 469.5L2001.1 481.4L2001.7 470.3L2002.3 491.9L2002.9 485.5L2003.5 480.2L2004.1 482.8L2004.7 457.2L2005.3 490.5L2005.9 488.0L2006.5 476.1L2007.1 468.7L2007.7 489.8L2008.3 487.4L2008.9 472.6L2009.5 465.5L2010.1 487.4L2010.7 472.4L2011.3 466.7L2011.9 490.3L2012.5 476.5L2013.1 459.2L2013.7 486.1L2014.3 486.9L2014.9 461.4L2015.5 465.5L2016.1 488.8L2016.7 483.4L2017.3 480.4L2017.9 485.0L2018.5 462.4L2019.1 488.0L2019.7 469.1L2020.3 472.8L2020.9 456.6L2021.5 463.6L2022.1 490.0L2022.7 484.0L2023.3 481.8L2023.9 476.5L2024.5 468.4L2025.1 469.5L2025.7 490.9L2026.3 481.7L2026.9 473.1L2027.5 468.9L2028.1 470.9L2028.7 466.1L2029.3 483.8L2029.9 467.2L2030.5 471.4L2031.1 464.1L2031.7 474.2L2032.3 455.7L2032.9 445.7L2033.5 470.2L2034.1 452.2L2034.7 458.7L2035.3 457.1L2035.9 470.0L2036.5 448.2L2037.1 456.3L2037.7 465.5L2038.3 462.6L2038.9 466.7L2039.5 469.2L2040.1 469.4L2040.7 466.2L2041.3 449.0L2041.9 453.9L2042.5 446.2L2043.1 445.3L2043.7 469.4L2044.3 445.3L2044.9 470.6L2045.5 446.2L2046.1 459.9L2046.7 459.0L2047.3 473.9L2047.9 473.3L2048.5 465.0L2049.1 474.8L2049.7 465.0L2050.3 448.4L2050.9 447.7L2051.5 471.2L2052.1 451.4L2052.7 461.3L2053.3 466.0L2053.9 451.9L2054.5 473.1L2055.1 470.4L2055.7 474.3L2056.3 458.8L2056.9 472.6L2057.5 469.6L2058.1 465.6L2058.7 471.9L2059.3 447.4L2059.9 470.3L2060.5 449.8L2061.1 455.7L2061.7 463.1L2062.3 472.5L2062.9 471.7L2063.5 457.0L2064.1 451.1L2064.7 451.6L2065.3 469.8L2065.9 473.9L2066.5 451.4L2067.1 475.3L2067.7 474.8L2068.3 473.9L2068.9 460.6L2069.5 474.2L2070.1 466.8L2070.7 453.8L2071.3 459.1L2071.9 453.9L2072.5 462.9L2073.1 468.7L2073.7 455.3L2074.3 475.7L2074.9 474.2L2075.5 474.2L2076.1 472.6L2076.7 454.3L2077.3 471.8L2077.9 472.8L2078.5 453.3L2079.1 451.7L2079.7 470.1L2080.3 468.8L2080.9 472.4L2081.5 451.8L2082.1 448.5L2082.7 446.9L2083.3 470.8L2083.9 456.1L2084.5 473.2L2085.1 470.0L2085.7 448.0L2086.3 451.4L2086.9 456.2L2087.5 462.0L2088.1 468.9L2088.7 453.6L2089.3 473.2L2089.9 451.3L2090.5 467.6L2091.1 470.8L2091.7 449.6L2092.3 457.6L2092.9 472.0L2093.5 459.0L2094.1 471.3L2094.7 473.4L2095.3 474.7L2095.9 475.3L2096.5 466.7L2097.1 472.3L2097.7 476.2L2098.3 463.3L2098.9 465.3L2099.5 454.1L2099.5 543.7L2098.9 538.0L2098.3 541.3L2097.7 548.6L2097.1 554.0L2096.5 548.7L2095.9 558.1L2095.3 558.3L2094.7 539.5L2094.1 550.3L2093.5 541.2L2092.9 544.6L2092.3 538.2L2091.7 555.6L2091.1 556.9L2090.5 544.7L2089.9 545.9L2089.3 550.4L2088.7 540.2L2088.1 555.3L2087.5 557.2L2086.9 554.2L2086.3 560.6L2085.7 535.3L2085.1 546.8L2084.5 536.5L2083.9 540.4L2083.3 559.8L2082.7 535.8L2082.1 556.2L2081.5 543.3L2080.9 549.5L2080.3 542.0L2079.7 561.0L2079.1 553.1L2078.5 563.3L2077.9 537.2L2077.3 538.2L2076.7 542.1L2076.1 540.3L2075.5 538.5L2074.9 545.1L2074.3 546.0L2073.7 548.3L2073.1 563.0L2072.5 543.8L2071.9 555.2L2071.3 543.9L2070.7 566.1L2070.1 567.6L2069.5 564.0L2068.9 541.1L2068.3 554.2L2067.7 544.0L2067.1 568.0L2066.5 551.4L2065.9 551.3L2065.3 546.7L2064.7 543.4L2064.1 545.5L2063.5 540.6L2062.9 564.7L2062.3 542.8L2061.7 557.3L2061.1 553.3L2060.5 548.7L2059.9 559.3L2059.3 542.5L2058.7 560.5L2058.1 551.1L2057.5 556.6L2056.9 541.9L2056.3 560.6L2055.7 559.9L2055.1 540.3L2054.5 537.1L2053.9 539.9L2053.3 538.4L2052.7 549.7L2052.1 540.5L2051.5 552.9L2050.9 545.1L2050.3 540.3L2049.7 559.7L2049.1 547.7L2048.5 554.6L2047.9 559.7L2047.3 553.9L2046.7 540.0L2046.1 551.4L2045.5 563.6L2044.9 564.0L2044.3 540.7L2043.7 542.9L2043.1 539.6L2042.5 546.3L2041.9 546.5L2041.3 546.1L2040.7 550.9L2040.1 562.0L2039.5 543.9L2038.9 541.7L2038.3 543.7L2037.7 542.8L2037.1 565.7L2036.5 550.1L2035.9 556.6L2035.3 544.3L2034.7 561.3L2034.1 543.4L2033.5 560.9L2032.9 556.0L2032.3 565.3L2031.7 536.8L2031.1 548.0L2030.5 540.6L2029.9 530.8L2029.3 539.8L2028.7 555.5L2028.1 539.4L2027.5 556.3L2026.9 543.0L2026.3 545.3L2025.7 524.3L2025.1 522.5L2024.5 522.8L2023.9 523.7L2023.3 521.3L2022.7 538.7L2022.1 548.4L2021.5 537.8L2020.9 553.2L2020.3 523.9L2019.7 534.0L2019.1 532.6L2018.5 526.8L2017.9 523.4L2017.3 532.6L2016.7 536.0L2016.1 558.2L2015.5 526.0L2014.9 548.0L2014.3 524.6L2013.7 542.5L2013.1 543.7L2012.5 532.0L2011.9 548.6L2011.3 559.6L2010.7 542.4L2010.1 533.9L2009.5 539.2L2008.9 535.3L2008.3 527.6L2007.7 546.2L2007.1 538.2L2006.5 545.6L2005.9 547.1L2005.3 538.1L2004.7 538.3L2004.1 537.7L2003.5 531.3L2002.9 545.6L2002.3 531.5L2001.7 530.5L2001.1 526.6L2000.5 559.6L1999.9 545.4L1999.3 525.0L1998.7 537.7L1998.1 533.4L1997.5 547.2L1996.9 526.4L1996.3 534.3L1995.7 540.1L1995.1 551.6L1994.5 550.6L1993.9 533.0L1993.3 526.4L1992.7 551.9L1992.1 559.1L1991.5 551.3L1990.9 525.7L1990.3 538.6L1989.7 522.7L1989.1 551.9L1988.5 525.0L1987.9 529.9L1987.3 533.6L1986.7 537.1L1986.1 524.4L1985.5 527.6L1984.9 533.6L1984.3 522.5L1983.7 524.5L1983.1 533.4L1982.5 556.4L1981.9 544.1L1981.3 531.8L1980.7 528.9L1980.1 523.4L1979.5 524.6L1978.9 531.1L1978.3 539.5L1977.7 525.0L1977.1 523.8L1976.5 548.6L1975.9 550.9L1975.3 538.7L1974.7 524.3L1974.1 537.4L1973.5 531.3L1972.9 526.0L1972.3 538.3L1971.7 533.6L1971.1 540.9L1970.5 547.5L1969.9 544.5L1969.3 546.2L1968.7 550.6L1968.1 523.2L1967.5 546.1L1966.9 538.0L1966.3 525.7L1965.7 527.1L1965.1 562.0L1964.5 543.3L1963.9 532.3L1963.3 544.1L1962.7 537.9L1962.1 553.3L1961.5 551.7L1960.9 537.9L1960.3 549.2L1959.7 545.7L1959.1 545.8L1958.5 538.6L1957.9 543.3L1957.3 552.4L1956.7 535.8L1956.1 542.1L1955.5 533.7L1954.9 534.8L1954.3 539.4L1953.7 548.5L1953.1 537.2L1952.5 548.9L1951.9 549.7L1951.3 535.0L1950.7 543.6L1950.1 540.3L1949.5 539.3L1948.9 562.4L1948.3 559.6L1947.7 552.4L1947.1 561.4L1946.5 538.9L1945.9 547.7L1945.3 538.3L1944.7 562.8L1944.1 537.7L1943.5 545.7L1942.9 538.1L1942.3 538.0L1941.7 554.4L1941.1 557.6L1940.5 563.9L1939.9 539.9L1939.3 548.3L1938.7 564.8L1938.1 543.0L1937.5 560.7L1936.9 563.1L1936.3 545.5L1935.7 539.9L1935.1 564.2L1934.5 543.3L1933.9 541.4L1933.3 560.1L1932.7 554.8L1932.1 541.3L1931.5 546.1L1930.9 553.8L1930.3 544.0L1929.7 539.9L1929.1 538.8L1928.5 554.2L1927.9 551.2L1927.3 559.8L1926.7 540.0L1926.1 543.6L1925.5 559.9L1924.9 558.5L1924.3 537.9L1923.7 558.6L1923.1 553.1L1922.5 543.4L1921.9 560.6L1921.3 550.0L1920.7 549.0L1920.1 540.7L1919.5 543.0L1918.9 554.6L1918.3 541.6L1917.7 553.1L1917.1 557.0Z" fill="#994100"/>
<path d="M1242.5 92V844" stroke="rgba(255,255,255,0.28)" stroke-width="1"/>
<circle cx="1242.5" cy="91.8" r="6.3" fill="#6a6a6d"/>
</svg>
<div class="t" style="left:105.4px;top:19.4px;font-size:15.2px;color:#646468">13</div>
<div class="t" style="left:213.7px;top:19.4px;font-size:15.2px;color:#646468">17</div>
<div class="t" style="left:322.1px;top:19.4px;font-size:15.2px;color:#646468">21</div>
<div class="t" style="left:430.4px;top:19.4px;font-size:15.2px;color:#646468">25</div>
<div class="t" style="left:538.8px;top:19.4px;font-size:15.2px;color:#646468">29</div>
<div class="t" style="left:647.1px;top:19.4px;font-size:15.2px;color:#646468">33</div>
<div class="t" style="left:755.4px;top:19.4px;font-size:15.2px;color:#646468">37</div>
<div class="t" style="left:863.8px;top:19.4px;font-size:15.2px;color:#646468">41</div>
<div class="t" style="left:972.1px;top:19.4px;font-size:15.2px;color:#646468">45</div>
<div class="t" style="left:1080.5px;top:19.4px;font-size:15.2px;color:#646468">49</div>
<div class="t" style="left:1188.8px;top:19.4px;font-size:15.2px;color:#646468">53</div>
<div class="t" style="left:1297.1px;top:19.4px;font-size:15.2px;color:#646468">57</div>
<div class="t" style="left:1405.5px;top:19.4px;font-size:15.2px;color:#646468">61</div>
<div class="t" style="left:1513.8px;top:19.4px;font-size:15.2px;color:#646468">65</div>
<div class="t" style="left:1622.2px;top:19.4px;font-size:15.2px;color:#646468">69</div>
<div class="t" style="left:55.4px;top:345.5px;font-family:'Liberation Mono',monospace;font-size:12px;letter-spacing:0.85px;color:#ffa6d8;-webkit-text-stroke:0.15px #ffa6d8;opacity:.88">VERSE</div>
<div class="t" style="left:274.4px;top:345.5px;font-family:'Liberation Mono',monospace;font-size:12px;letter-spacing:0.85px;color:#ffc68a;-webkit-text-stroke:0.15px #ffc68a;opacity:.88">CHORUS</div>
<div class="t" style="left:599.4px;top:345.5px;font-family:'Liberation Mono',monospace;font-size:12px;letter-spacing:0.85px;color:#ffa6d8;-webkit-text-stroke:0.15px #ffa6d8;opacity:.88">VERSE 2</div>
<div class="t" style="left:762.0px;top:345.5px;font-family:'Liberation Mono',monospace;font-size:12px;letter-spacing:0.85px;color:#ffc68a;-webkit-text-stroke:0.15px #ffc68a;opacity:.88">CHORUS</div>
<div class="t" style="left:1276.9px;top:345.5px;font-family:'Liberation Mono',monospace;font-size:12px;letter-spacing:0.85px;color:#fff3a0;-webkit-text-stroke:0.15px #fff3a0;opacity:.88">BRIDGE</div>
<div class="t" style="left:1514.5px;top:345.5px;font-family:'Liberation Mono',monospace;font-size:12px;letter-spacing:0.85px;color:#ffc68a;-webkit-text-stroke:0.15px #ffc68a;opacity:.88">CHORUS</div>
</div>

<!-- side arrows panel -->
<div class="a" style="left:415.6px;top:407px;width:47.4px;height:197px;border-radius:10px;background:#1e1e21"></div>
<svg style="left:431px;top:409px" width="16" height="16" viewBox="0 0 16 16"><path d="M8 14.5V2M3 7L8 2L13 7" fill="none" stroke="#6c6c70" stroke-width="1.5" stroke-linecap="round" stroke-linejoin="round"/></svg>
<svg style="left:431px;top:587px" width="16" height="16" viewBox="0 0 16 16"><path d="M8 1.5V14M3 9L8 14L13 9" fill="none" stroke="#6c6c70" stroke-width="1.5" stroke-linecap="round" stroke-linejoin="round"/></svg>

<!-- nav pill -->
<div class="btn" style="left:596.4px;top:616.3px;width:102.4px;height:54.7px;background:#1a1a1d"></div>
<div class="btn" style="left:601.5px;top:621.5px;width:44px;height:44px;background:#141417"></div>
<div class="btn" style="left:650.5px;top:621.5px;width:44px;height:44px;background:#141417"></div>
<svg style="left:617px;top:636px" width="12" height="15" viewBox="0 0 12 15"><path d="M8 3L3.8 7.5L8 12" fill="none" stroke="#8e8e92" stroke-width="2.2" stroke-linecap="round" stroke-linejoin="round"/></svg>
<svg style="left:667px;top:636px" width="12" height="15" viewBox="0 0 12 15"><path d="M4 3L8.2 7.5L4 12" fill="none" stroke="#8e8e92" stroke-width="2.2" stroke-linecap="round" stroke-linejoin="round"/></svg>
<div class="btn" style="left:709.4px;top:616.3px;width:53.4px;height:53.4px;background:#1a1a1d"></div>
<div class="btn" style="left:714px;top:621px;width:44.5px;height:44.5px;background:#242428"></div>
<svg style="left:730px;top:633px" width="12" height="22"><circle cx="6" cy="4.6" r="2.2" fill="#f2f2f2"/><circle cx="6" cy="11" r="2.2" fill="#f2f2f2"/><circle cx="6" cy="17.3" r="2.2" fill="#f2f2f2"/></svg>

<!-- Alternates panel -->
<div class="a" style="left:464px;top:680.4px;width:431px;height:153.2px;border-radius:12px;background:#252529"></div>
<div class="t" style="left:475.5px;top:698.1px;font-size:16.7px;color:#f0f0f0">Alternates</div>
<div class="t" style="left:638.8px;top:737.4px;font-size:18px;color:#f0f0f0">Loading...</div>
<div class="btn" style="left:742.5px;top:772.9px;width:140.2px;height:49.1px;background:radial-gradient(ellipse 45% 90% at 12% 100%,#ee3f9c 0%,#e8468e 35%,rgba(231,80,70,0) 100%),linear-gradient(90deg,#e4504a 0%,#e65632 40%,#e8612d 75%,#e86c2a 100%)"></div>
<svg style="left:761px;top:789px" width="28" height="18" viewBox="0 0 28 18"><rect x="1" y="2" width="2.2" height="14" rx="1" fill="#fff"/><rect x="24.8" y="2" width="2.2" height="14" rx="1" fill="#fff"/><rect x="5.5" y="3" width="17" height="12" rx="1.5" fill="#fff"/></svg>
<div class="t" style="left:796.5px;top:789.7px;font-size:17.7px;color:#fff">Replace</div>

<!-- Learn pill -->
<div class="btn" style="left:1982px;top:85.2px;width:160px;height:48.2px;background:rgba(72,72,77,0.42)"></div>
<svg style="left:2000px;top:98px" width="26" height="24" viewBox="0 0 26 24"><path d="M11.6 2.3 Q12.8 1.6 14 2.3 L23.2 7.6 Q24.4 8.5 23.2 9.4 L14 14.6 Q12.8 15.3 11.6 14.6 L2.6 9.4 Q1.4 8.5 2.6 7.6 Z" fill="#c2c2c4"/><path d="M5.8 13.2 L11.3 16.3 Q12.8 17.2 14.3 16.3 L19.4 13.4 V16.6 Q12.6 23.6 5.8 16.6 Z" fill="#c2c2c4"/><path d="M22.3 9 V13.8" stroke="#c2c2c4" stroke-width="1.6" stroke-linecap="round"/></svg>
<div class="t" style="left:2035.8px;top:101.6px;font-size:17.75px;color:#bdbdbf">Learn</div>

</body></html>
